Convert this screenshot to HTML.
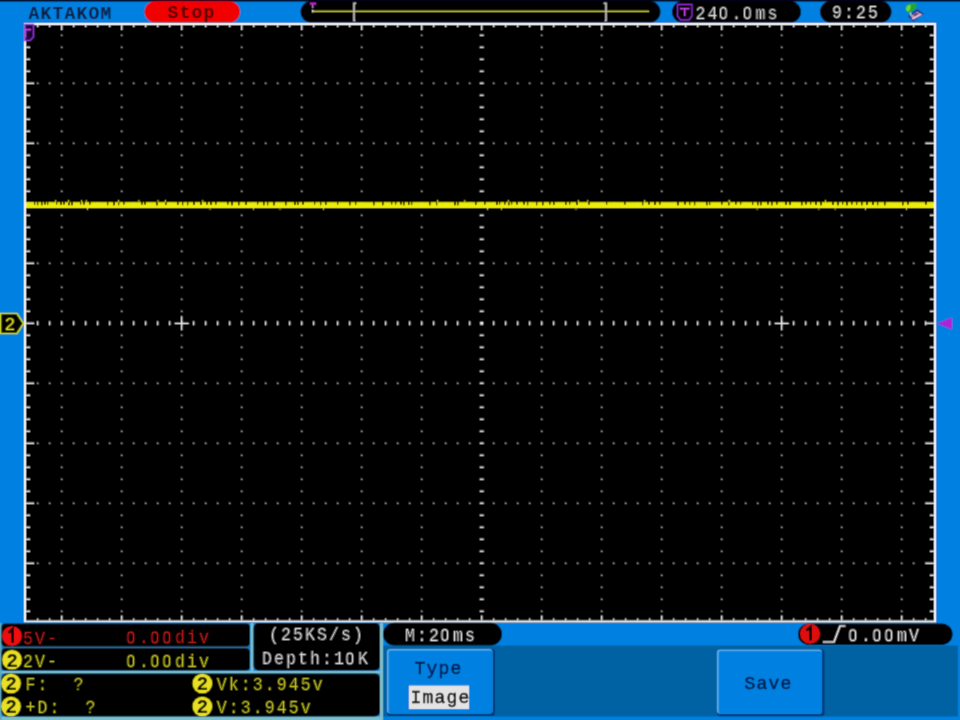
<!DOCTYPE html>
<html><head><meta charset="utf-8"><style>
html,body{margin:0;padding:0;background:#0080e0;overflow:hidden}
svg{display:block;will-change:transform}
text{font-family:"Liberation Mono"}
</style></head><body>
<svg width="960" height="720" viewBox="0 0 960 720">
<defs><filter id="soft" x="0" y="0" width="960" height="720" filterUnits="userSpaceOnUse"><feConvolveMatrix order="3" kernelMatrix="1 3 1 3 16 3 1 3 1" divisor="32" edgeMode="duplicate" preserveAlpha="true"/></filter></defs>
<g filter="url(#soft)">
<rect x="0" y="0" width="960" height="720" fill="#0080e0"/>
<rect x="0" y="0" width="960" height="1" fill="#000018"/>
<rect x="0" y="1" width="960" height="1" fill="#004080"/>
<text style="white-space:pre" x="28.60 40.60 52.60 64.60 76.60 88.60 100.60" y="18.5" fill="#0a1a40" font-size="18" font-weight="bold" >AKTAKOM</text>
<rect x="144.5" y="1.2" width="95.5" height="21.3" rx="10.65" ry="10.65" fill="#f20000"/>
<text style="white-space:pre" x="167.60 179.60 191.60 203.60" y="17.5" fill="#4a0000" font-size="18" font-weight="bold" >Stop</text>
<rect x="300.5" y="1" width="360.0" height="21.6" rx="10.8" ry="10.8" fill="#000"/>
<rect x="312" y="10.6" width="337" height="1.5" fill="#c0c030"/>
<rect x="312" y="10" width="1.5" height="2.4000000000000004" fill="#d8d8c0"/>
<path d="M310 2.5 H316 V4.6 H310 Z" fill="#d020e0"/>
<rect x="312.2" y="4.6" width="1.2" height="3.6" fill="#c0a0d0"/>
<path d="M353.2 2.6 H356.2 V3.9 H354.8 V20 L356 21.6 H353.2 Z" fill="#c8c8c8"/>
<path d="M603.6 2.6 H606.8 V21.6 H604 L605.2 20 V3.9 H603.6 Z" fill="#c8c8c8"/>
<rect x="672" y="1" width="129" height="21.6" rx="10.8" ry="10.8" fill="#000"/>
<path d="M677.5 4.5 H692 V16 L689 20 H680.5 L677.5 16 Z" fill="none" stroke="#8a2ad0" stroke-width="1.3"/>
<path d="M680 8 H689.5 V9.5 H685.5 V16 H684 V9.5 H680 Z" fill="#c040e0"/>
<text style="white-space:pre" x="756.01 769.06 782.10 795.14 808.19 821.23 834.27" y="19" fill="#e0e0e0" font-size="18" font-weight="normal" stroke="#000" stroke-width="0.2"  transform="scale(0.92 1)">24 . ms</text>
<rect x="720.50" y="7.60" width="5.6" height="10.8" rx="2.9" ry="3.4" fill="none" stroke="#e0e0e0" stroke-width="1.25"/>
<rect x="744.50" y="7.60" width="5.6" height="10.8" rx="2.9" ry="3.4" fill="none" stroke="#e0e0e0" stroke-width="1.25"/>
<rect x="820" y="1" width="71.5" height="21.6" rx="10.8" ry="10.8" fill="#000"/>
<text style="white-space:pre" x="904.38 917.43 930.47 943.51" y="17.8" fill="#e8e8e8" font-size="18" font-weight="normal" stroke="#000" stroke-width="0.2"  transform="scale(0.92 1)">9:25</text>
<g transform="translate(914 12) scale(1.15) translate(-914 -12)">
<path d="M909.8 15.6 L916.6 10.6 L921.2 13.6 L913.4 19.2 Z" fill="#b890b8" stroke="#143080" stroke-width="1.5"/>
<path d="M911.8 17.4 L920 13.2 L921 14.4 L913.2 18.8 Z" fill="#e6bcd4"/>
<path d="M913 14.4 L916.2 12.6 L918 13.6 L914.8 15.6 Z" fill="#5a3c70"/>
<path d="M910.6 11.5 L911.6 15.2" stroke="#a8d0e0" stroke-width="1.4"/>
<path d="M906.5 9.5 C906.2 6.4 908.6 4.6 911.6 4.8 C913.8 3.4 916.6 4.2 916.4 6.8 C916.2 9.4 913 10.6 911 12.4 C908.8 12.6 906.8 11.6 906.5 9.5 Z" fill="#26a626"/>
<path d="M907.2 9.6 C907 7.2 908.8 5.8 911 6 C911.5 8 910.5 10.5 909.5 11.6 C908 11.4 907.3 10.6 907.2 9.6 Z" fill="#6ad850"/>
</g>
<rect x="24" y="23" width="912" height="599.5" fill="#000"/>
<path d="M60.9 34.5h1.6v1.6h-1.6zM60.9 46.5h1.6v1.6h-1.6zM60.9 58.5h1.6v1.6h-1.6zM60.9 70.5h1.6v1.6h-1.6zM60.9 82.5h1.6v1.6h-1.6zM60.9 94.5h1.6v1.6h-1.6zM60.9 106.5h1.6v1.6h-1.6zM60.9 118.5h1.6v1.6h-1.6zM60.9 130.5h1.6v1.6h-1.6zM60.9 142.5h1.6v1.6h-1.6zM60.9 154.5h1.6v1.6h-1.6zM60.9 166.5h1.6v1.6h-1.6zM60.9 178.5h1.6v1.6h-1.6zM60.9 190.5h1.6v1.6h-1.6zM60.9 202.5h1.6v1.6h-1.6zM60.9 214.5h1.6v1.6h-1.6zM60.9 226.5h1.6v1.6h-1.6zM60.9 238.5h1.6v1.6h-1.6zM60.9 250.5h1.6v1.6h-1.6zM60.9 262.5h1.6v1.6h-1.6zM60.9 274.5h1.6v1.6h-1.6zM60.9 286.5h1.6v1.6h-1.6zM60.9 298.5h1.6v1.6h-1.6zM60.9 310.5h1.6v1.6h-1.6zM60.9 322.5h1.6v1.6h-1.6zM60.9 334.5h1.6v1.6h-1.6zM60.9 346.5h1.6v1.6h-1.6zM60.9 358.5h1.6v1.6h-1.6zM60.9 370.5h1.6v1.6h-1.6zM60.9 382.5h1.6v1.6h-1.6zM60.9 394.5h1.6v1.6h-1.6zM60.9 406.5h1.6v1.6h-1.6zM60.9 418.5h1.6v1.6h-1.6zM60.9 430.5h1.6v1.6h-1.6zM60.9 442.5h1.6v1.6h-1.6zM60.9 454.5h1.6v1.6h-1.6zM60.9 466.5h1.6v1.6h-1.6zM60.9 478.5h1.6v1.6h-1.6zM60.9 490.5h1.6v1.6h-1.6zM60.9 502.5h1.6v1.6h-1.6zM60.9 514.5h1.6v1.6h-1.6zM60.9 526.5h1.6v1.6h-1.6zM60.9 538.5h1.6v1.6h-1.6zM60.9 550.5h1.6v1.6h-1.6zM60.9 562.5h1.6v1.6h-1.6zM60.9 574.5h1.6v1.6h-1.6zM60.9 586.5h1.6v1.6h-1.6zM60.9 598.5h1.6v1.6h-1.6zM60.9 610.5h1.6v1.6h-1.6zM120.9 34.5h1.6v1.6h-1.6zM120.9 46.5h1.6v1.6h-1.6zM120.9 58.5h1.6v1.6h-1.6zM120.9 70.5h1.6v1.6h-1.6zM120.9 82.5h1.6v1.6h-1.6zM120.9 94.5h1.6v1.6h-1.6zM120.9 106.5h1.6v1.6h-1.6zM120.9 118.5h1.6v1.6h-1.6zM120.9 130.5h1.6v1.6h-1.6zM120.9 142.5h1.6v1.6h-1.6zM120.9 154.5h1.6v1.6h-1.6zM120.9 166.5h1.6v1.6h-1.6zM120.9 178.5h1.6v1.6h-1.6zM120.9 190.5h1.6v1.6h-1.6zM120.9 202.5h1.6v1.6h-1.6zM120.9 214.5h1.6v1.6h-1.6zM120.9 226.5h1.6v1.6h-1.6zM120.9 238.5h1.6v1.6h-1.6zM120.9 250.5h1.6v1.6h-1.6zM120.9 262.5h1.6v1.6h-1.6zM120.9 274.5h1.6v1.6h-1.6zM120.9 286.5h1.6v1.6h-1.6zM120.9 298.5h1.6v1.6h-1.6zM120.9 310.5h1.6v1.6h-1.6zM120.9 322.5h1.6v1.6h-1.6zM120.9 334.5h1.6v1.6h-1.6zM120.9 346.5h1.6v1.6h-1.6zM120.9 358.5h1.6v1.6h-1.6zM120.9 370.5h1.6v1.6h-1.6zM120.9 382.5h1.6v1.6h-1.6zM120.9 394.5h1.6v1.6h-1.6zM120.9 406.5h1.6v1.6h-1.6zM120.9 418.5h1.6v1.6h-1.6zM120.9 430.5h1.6v1.6h-1.6zM120.9 442.5h1.6v1.6h-1.6zM120.9 454.5h1.6v1.6h-1.6zM120.9 466.5h1.6v1.6h-1.6zM120.9 478.5h1.6v1.6h-1.6zM120.9 490.5h1.6v1.6h-1.6zM120.9 502.5h1.6v1.6h-1.6zM120.9 514.5h1.6v1.6h-1.6zM120.9 526.5h1.6v1.6h-1.6zM120.9 538.5h1.6v1.6h-1.6zM120.9 550.5h1.6v1.6h-1.6zM120.9 562.5h1.6v1.6h-1.6zM120.9 574.5h1.6v1.6h-1.6zM120.9 586.5h1.6v1.6h-1.6zM120.9 598.5h1.6v1.6h-1.6zM120.9 610.5h1.6v1.6h-1.6zM180.9 34.5h1.6v1.6h-1.6zM180.9 46.5h1.6v1.6h-1.6zM180.9 58.5h1.6v1.6h-1.6zM180.9 70.5h1.6v1.6h-1.6zM180.9 82.5h1.6v1.6h-1.6zM180.9 94.5h1.6v1.6h-1.6zM180.9 106.5h1.6v1.6h-1.6zM180.9 118.5h1.6v1.6h-1.6zM180.9 130.5h1.6v1.6h-1.6zM180.9 142.5h1.6v1.6h-1.6zM180.9 154.5h1.6v1.6h-1.6zM180.9 166.5h1.6v1.6h-1.6zM180.9 178.5h1.6v1.6h-1.6zM180.9 190.5h1.6v1.6h-1.6zM180.9 202.5h1.6v1.6h-1.6zM180.9 214.5h1.6v1.6h-1.6zM180.9 226.5h1.6v1.6h-1.6zM180.9 238.5h1.6v1.6h-1.6zM180.9 250.5h1.6v1.6h-1.6zM180.9 262.5h1.6v1.6h-1.6zM180.9 274.5h1.6v1.6h-1.6zM180.9 286.5h1.6v1.6h-1.6zM180.9 298.5h1.6v1.6h-1.6zM180.9 310.5h1.6v1.6h-1.6zM180.9 322.5h1.6v1.6h-1.6zM180.9 334.5h1.6v1.6h-1.6zM180.9 346.5h1.6v1.6h-1.6zM180.9 358.5h1.6v1.6h-1.6zM180.9 370.5h1.6v1.6h-1.6zM180.9 382.5h1.6v1.6h-1.6zM180.9 394.5h1.6v1.6h-1.6zM180.9 406.5h1.6v1.6h-1.6zM180.9 418.5h1.6v1.6h-1.6zM180.9 430.5h1.6v1.6h-1.6zM180.9 442.5h1.6v1.6h-1.6zM180.9 454.5h1.6v1.6h-1.6zM180.9 466.5h1.6v1.6h-1.6zM180.9 478.5h1.6v1.6h-1.6zM180.9 490.5h1.6v1.6h-1.6zM180.9 502.5h1.6v1.6h-1.6zM180.9 514.5h1.6v1.6h-1.6zM180.9 526.5h1.6v1.6h-1.6zM180.9 538.5h1.6v1.6h-1.6zM180.9 550.5h1.6v1.6h-1.6zM180.9 562.5h1.6v1.6h-1.6zM180.9 574.5h1.6v1.6h-1.6zM180.9 586.5h1.6v1.6h-1.6zM180.9 598.5h1.6v1.6h-1.6zM180.9 610.5h1.6v1.6h-1.6zM240.9 34.5h1.6v1.6h-1.6zM240.9 46.5h1.6v1.6h-1.6zM240.9 58.5h1.6v1.6h-1.6zM240.9 70.5h1.6v1.6h-1.6zM240.9 82.5h1.6v1.6h-1.6zM240.9 94.5h1.6v1.6h-1.6zM240.9 106.5h1.6v1.6h-1.6zM240.9 118.5h1.6v1.6h-1.6zM240.9 130.5h1.6v1.6h-1.6zM240.9 142.5h1.6v1.6h-1.6zM240.9 154.5h1.6v1.6h-1.6zM240.9 166.5h1.6v1.6h-1.6zM240.9 178.5h1.6v1.6h-1.6zM240.9 190.5h1.6v1.6h-1.6zM240.9 202.5h1.6v1.6h-1.6zM240.9 214.5h1.6v1.6h-1.6zM240.9 226.5h1.6v1.6h-1.6zM240.9 238.5h1.6v1.6h-1.6zM240.9 250.5h1.6v1.6h-1.6zM240.9 262.5h1.6v1.6h-1.6zM240.9 274.5h1.6v1.6h-1.6zM240.9 286.5h1.6v1.6h-1.6zM240.9 298.5h1.6v1.6h-1.6zM240.9 310.5h1.6v1.6h-1.6zM240.9 322.5h1.6v1.6h-1.6zM240.9 334.5h1.6v1.6h-1.6zM240.9 346.5h1.6v1.6h-1.6zM240.9 358.5h1.6v1.6h-1.6zM240.9 370.5h1.6v1.6h-1.6zM240.9 382.5h1.6v1.6h-1.6zM240.9 394.5h1.6v1.6h-1.6zM240.9 406.5h1.6v1.6h-1.6zM240.9 418.5h1.6v1.6h-1.6zM240.9 430.5h1.6v1.6h-1.6zM240.9 442.5h1.6v1.6h-1.6zM240.9 454.5h1.6v1.6h-1.6zM240.9 466.5h1.6v1.6h-1.6zM240.9 478.5h1.6v1.6h-1.6zM240.9 490.5h1.6v1.6h-1.6zM240.9 502.5h1.6v1.6h-1.6zM240.9 514.5h1.6v1.6h-1.6zM240.9 526.5h1.6v1.6h-1.6zM240.9 538.5h1.6v1.6h-1.6zM240.9 550.5h1.6v1.6h-1.6zM240.9 562.5h1.6v1.6h-1.6zM240.9 574.5h1.6v1.6h-1.6zM240.9 586.5h1.6v1.6h-1.6zM240.9 598.5h1.6v1.6h-1.6zM240.9 610.5h1.6v1.6h-1.6zM300.9 34.5h1.6v1.6h-1.6zM300.9 46.5h1.6v1.6h-1.6zM300.9 58.5h1.6v1.6h-1.6zM300.9 70.5h1.6v1.6h-1.6zM300.9 82.5h1.6v1.6h-1.6zM300.9 94.5h1.6v1.6h-1.6zM300.9 106.5h1.6v1.6h-1.6zM300.9 118.5h1.6v1.6h-1.6zM300.9 130.5h1.6v1.6h-1.6zM300.9 142.5h1.6v1.6h-1.6zM300.9 154.5h1.6v1.6h-1.6zM300.9 166.5h1.6v1.6h-1.6zM300.9 178.5h1.6v1.6h-1.6zM300.9 190.5h1.6v1.6h-1.6zM300.9 202.5h1.6v1.6h-1.6zM300.9 214.5h1.6v1.6h-1.6zM300.9 226.5h1.6v1.6h-1.6zM300.9 238.5h1.6v1.6h-1.6zM300.9 250.5h1.6v1.6h-1.6zM300.9 262.5h1.6v1.6h-1.6zM300.9 274.5h1.6v1.6h-1.6zM300.9 286.5h1.6v1.6h-1.6zM300.9 298.5h1.6v1.6h-1.6zM300.9 310.5h1.6v1.6h-1.6zM300.9 322.5h1.6v1.6h-1.6zM300.9 334.5h1.6v1.6h-1.6zM300.9 346.5h1.6v1.6h-1.6zM300.9 358.5h1.6v1.6h-1.6zM300.9 370.5h1.6v1.6h-1.6zM300.9 382.5h1.6v1.6h-1.6zM300.9 394.5h1.6v1.6h-1.6zM300.9 406.5h1.6v1.6h-1.6zM300.9 418.5h1.6v1.6h-1.6zM300.9 430.5h1.6v1.6h-1.6zM300.9 442.5h1.6v1.6h-1.6zM300.9 454.5h1.6v1.6h-1.6zM300.9 466.5h1.6v1.6h-1.6zM300.9 478.5h1.6v1.6h-1.6zM300.9 490.5h1.6v1.6h-1.6zM300.9 502.5h1.6v1.6h-1.6zM300.9 514.5h1.6v1.6h-1.6zM300.9 526.5h1.6v1.6h-1.6zM300.9 538.5h1.6v1.6h-1.6zM300.9 550.5h1.6v1.6h-1.6zM300.9 562.5h1.6v1.6h-1.6zM300.9 574.5h1.6v1.6h-1.6zM300.9 586.5h1.6v1.6h-1.6zM300.9 598.5h1.6v1.6h-1.6zM300.9 610.5h1.6v1.6h-1.6zM360.9 34.5h1.6v1.6h-1.6zM360.9 46.5h1.6v1.6h-1.6zM360.9 58.5h1.6v1.6h-1.6zM360.9 70.5h1.6v1.6h-1.6zM360.9 82.5h1.6v1.6h-1.6zM360.9 94.5h1.6v1.6h-1.6zM360.9 106.5h1.6v1.6h-1.6zM360.9 118.5h1.6v1.6h-1.6zM360.9 130.5h1.6v1.6h-1.6zM360.9 142.5h1.6v1.6h-1.6zM360.9 154.5h1.6v1.6h-1.6zM360.9 166.5h1.6v1.6h-1.6zM360.9 178.5h1.6v1.6h-1.6zM360.9 190.5h1.6v1.6h-1.6zM360.9 202.5h1.6v1.6h-1.6zM360.9 214.5h1.6v1.6h-1.6zM360.9 226.5h1.6v1.6h-1.6zM360.9 238.5h1.6v1.6h-1.6zM360.9 250.5h1.6v1.6h-1.6zM360.9 262.5h1.6v1.6h-1.6zM360.9 274.5h1.6v1.6h-1.6zM360.9 286.5h1.6v1.6h-1.6zM360.9 298.5h1.6v1.6h-1.6zM360.9 310.5h1.6v1.6h-1.6zM360.9 322.5h1.6v1.6h-1.6zM360.9 334.5h1.6v1.6h-1.6zM360.9 346.5h1.6v1.6h-1.6zM360.9 358.5h1.6v1.6h-1.6zM360.9 370.5h1.6v1.6h-1.6zM360.9 382.5h1.6v1.6h-1.6zM360.9 394.5h1.6v1.6h-1.6zM360.9 406.5h1.6v1.6h-1.6zM360.9 418.5h1.6v1.6h-1.6zM360.9 430.5h1.6v1.6h-1.6zM360.9 442.5h1.6v1.6h-1.6zM360.9 454.5h1.6v1.6h-1.6zM360.9 466.5h1.6v1.6h-1.6zM360.9 478.5h1.6v1.6h-1.6zM360.9 490.5h1.6v1.6h-1.6zM360.9 502.5h1.6v1.6h-1.6zM360.9 514.5h1.6v1.6h-1.6zM360.9 526.5h1.6v1.6h-1.6zM360.9 538.5h1.6v1.6h-1.6zM360.9 550.5h1.6v1.6h-1.6zM360.9 562.5h1.6v1.6h-1.6zM360.9 574.5h1.6v1.6h-1.6zM360.9 586.5h1.6v1.6h-1.6zM360.9 598.5h1.6v1.6h-1.6zM360.9 610.5h1.6v1.6h-1.6zM420.9 34.5h1.6v1.6h-1.6zM420.9 46.5h1.6v1.6h-1.6zM420.9 58.5h1.6v1.6h-1.6zM420.9 70.5h1.6v1.6h-1.6zM420.9 82.5h1.6v1.6h-1.6zM420.9 94.5h1.6v1.6h-1.6zM420.9 106.5h1.6v1.6h-1.6zM420.9 118.5h1.6v1.6h-1.6zM420.9 130.5h1.6v1.6h-1.6zM420.9 142.5h1.6v1.6h-1.6zM420.9 154.5h1.6v1.6h-1.6zM420.9 166.5h1.6v1.6h-1.6zM420.9 178.5h1.6v1.6h-1.6zM420.9 190.5h1.6v1.6h-1.6zM420.9 202.5h1.6v1.6h-1.6zM420.9 214.5h1.6v1.6h-1.6zM420.9 226.5h1.6v1.6h-1.6zM420.9 238.5h1.6v1.6h-1.6zM420.9 250.5h1.6v1.6h-1.6zM420.9 262.5h1.6v1.6h-1.6zM420.9 274.5h1.6v1.6h-1.6zM420.9 286.5h1.6v1.6h-1.6zM420.9 298.5h1.6v1.6h-1.6zM420.9 310.5h1.6v1.6h-1.6zM420.9 322.5h1.6v1.6h-1.6zM420.9 334.5h1.6v1.6h-1.6zM420.9 346.5h1.6v1.6h-1.6zM420.9 358.5h1.6v1.6h-1.6zM420.9 370.5h1.6v1.6h-1.6zM420.9 382.5h1.6v1.6h-1.6zM420.9 394.5h1.6v1.6h-1.6zM420.9 406.5h1.6v1.6h-1.6zM420.9 418.5h1.6v1.6h-1.6zM420.9 430.5h1.6v1.6h-1.6zM420.9 442.5h1.6v1.6h-1.6zM420.9 454.5h1.6v1.6h-1.6zM420.9 466.5h1.6v1.6h-1.6zM420.9 478.5h1.6v1.6h-1.6zM420.9 490.5h1.6v1.6h-1.6zM420.9 502.5h1.6v1.6h-1.6zM420.9 514.5h1.6v1.6h-1.6zM420.9 526.5h1.6v1.6h-1.6zM420.9 538.5h1.6v1.6h-1.6zM420.9 550.5h1.6v1.6h-1.6zM420.9 562.5h1.6v1.6h-1.6zM420.9 574.5h1.6v1.6h-1.6zM420.9 586.5h1.6v1.6h-1.6zM420.9 598.5h1.6v1.6h-1.6zM420.9 610.5h1.6v1.6h-1.6zM540.9 34.5h1.6v1.6h-1.6zM540.9 46.5h1.6v1.6h-1.6zM540.9 58.5h1.6v1.6h-1.6zM540.9 70.5h1.6v1.6h-1.6zM540.9 82.5h1.6v1.6h-1.6zM540.9 94.5h1.6v1.6h-1.6zM540.9 106.5h1.6v1.6h-1.6zM540.9 118.5h1.6v1.6h-1.6zM540.9 130.5h1.6v1.6h-1.6zM540.9 142.5h1.6v1.6h-1.6zM540.9 154.5h1.6v1.6h-1.6zM540.9 166.5h1.6v1.6h-1.6zM540.9 178.5h1.6v1.6h-1.6zM540.9 190.5h1.6v1.6h-1.6zM540.9 202.5h1.6v1.6h-1.6zM540.9 214.5h1.6v1.6h-1.6zM540.9 226.5h1.6v1.6h-1.6zM540.9 238.5h1.6v1.6h-1.6zM540.9 250.5h1.6v1.6h-1.6zM540.9 262.5h1.6v1.6h-1.6zM540.9 274.5h1.6v1.6h-1.6zM540.9 286.5h1.6v1.6h-1.6zM540.9 298.5h1.6v1.6h-1.6zM540.9 310.5h1.6v1.6h-1.6zM540.9 322.5h1.6v1.6h-1.6zM540.9 334.5h1.6v1.6h-1.6zM540.9 346.5h1.6v1.6h-1.6zM540.9 358.5h1.6v1.6h-1.6zM540.9 370.5h1.6v1.6h-1.6zM540.9 382.5h1.6v1.6h-1.6zM540.9 394.5h1.6v1.6h-1.6zM540.9 406.5h1.6v1.6h-1.6zM540.9 418.5h1.6v1.6h-1.6zM540.9 430.5h1.6v1.6h-1.6zM540.9 442.5h1.6v1.6h-1.6zM540.9 454.5h1.6v1.6h-1.6zM540.9 466.5h1.6v1.6h-1.6zM540.9 478.5h1.6v1.6h-1.6zM540.9 490.5h1.6v1.6h-1.6zM540.9 502.5h1.6v1.6h-1.6zM540.9 514.5h1.6v1.6h-1.6zM540.9 526.5h1.6v1.6h-1.6zM540.9 538.5h1.6v1.6h-1.6zM540.9 550.5h1.6v1.6h-1.6zM540.9 562.5h1.6v1.6h-1.6zM540.9 574.5h1.6v1.6h-1.6zM540.9 586.5h1.6v1.6h-1.6zM540.9 598.5h1.6v1.6h-1.6zM540.9 610.5h1.6v1.6h-1.6zM600.9 34.5h1.6v1.6h-1.6zM600.9 46.5h1.6v1.6h-1.6zM600.9 58.5h1.6v1.6h-1.6zM600.9 70.5h1.6v1.6h-1.6zM600.9 82.5h1.6v1.6h-1.6zM600.9 94.5h1.6v1.6h-1.6zM600.9 106.5h1.6v1.6h-1.6zM600.9 118.5h1.6v1.6h-1.6zM600.9 130.5h1.6v1.6h-1.6zM600.9 142.5h1.6v1.6h-1.6zM600.9 154.5h1.6v1.6h-1.6zM600.9 166.5h1.6v1.6h-1.6zM600.9 178.5h1.6v1.6h-1.6zM600.9 190.5h1.6v1.6h-1.6zM600.9 202.5h1.6v1.6h-1.6zM600.9 214.5h1.6v1.6h-1.6zM600.9 226.5h1.6v1.6h-1.6zM600.9 238.5h1.6v1.6h-1.6zM600.9 250.5h1.6v1.6h-1.6zM600.9 262.5h1.6v1.6h-1.6zM600.9 274.5h1.6v1.6h-1.6zM600.9 286.5h1.6v1.6h-1.6zM600.9 298.5h1.6v1.6h-1.6zM600.9 310.5h1.6v1.6h-1.6zM600.9 322.5h1.6v1.6h-1.6zM600.9 334.5h1.6v1.6h-1.6zM600.9 346.5h1.6v1.6h-1.6zM600.9 358.5h1.6v1.6h-1.6zM600.9 370.5h1.6v1.6h-1.6zM600.9 382.5h1.6v1.6h-1.6zM600.9 394.5h1.6v1.6h-1.6zM600.9 406.5h1.6v1.6h-1.6zM600.9 418.5h1.6v1.6h-1.6zM600.9 430.5h1.6v1.6h-1.6zM600.9 442.5h1.6v1.6h-1.6zM600.9 454.5h1.6v1.6h-1.6zM600.9 466.5h1.6v1.6h-1.6zM600.9 478.5h1.6v1.6h-1.6zM600.9 490.5h1.6v1.6h-1.6zM600.9 502.5h1.6v1.6h-1.6zM600.9 514.5h1.6v1.6h-1.6zM600.9 526.5h1.6v1.6h-1.6zM600.9 538.5h1.6v1.6h-1.6zM600.9 550.5h1.6v1.6h-1.6zM600.9 562.5h1.6v1.6h-1.6zM600.9 574.5h1.6v1.6h-1.6zM600.9 586.5h1.6v1.6h-1.6zM600.9 598.5h1.6v1.6h-1.6zM600.9 610.5h1.6v1.6h-1.6zM660.9 34.5h1.6v1.6h-1.6zM660.9 46.5h1.6v1.6h-1.6zM660.9 58.5h1.6v1.6h-1.6zM660.9 70.5h1.6v1.6h-1.6zM660.9 82.5h1.6v1.6h-1.6zM660.9 94.5h1.6v1.6h-1.6zM660.9 106.5h1.6v1.6h-1.6zM660.9 118.5h1.6v1.6h-1.6zM660.9 130.5h1.6v1.6h-1.6zM660.9 142.5h1.6v1.6h-1.6zM660.9 154.5h1.6v1.6h-1.6zM660.9 166.5h1.6v1.6h-1.6zM660.9 178.5h1.6v1.6h-1.6zM660.9 190.5h1.6v1.6h-1.6zM660.9 202.5h1.6v1.6h-1.6zM660.9 214.5h1.6v1.6h-1.6zM660.9 226.5h1.6v1.6h-1.6zM660.9 238.5h1.6v1.6h-1.6zM660.9 250.5h1.6v1.6h-1.6zM660.9 262.5h1.6v1.6h-1.6zM660.9 274.5h1.6v1.6h-1.6zM660.9 286.5h1.6v1.6h-1.6zM660.9 298.5h1.6v1.6h-1.6zM660.9 310.5h1.6v1.6h-1.6zM660.9 322.5h1.6v1.6h-1.6zM660.9 334.5h1.6v1.6h-1.6zM660.9 346.5h1.6v1.6h-1.6zM660.9 358.5h1.6v1.6h-1.6zM660.9 370.5h1.6v1.6h-1.6zM660.9 382.5h1.6v1.6h-1.6zM660.9 394.5h1.6v1.6h-1.6zM660.9 406.5h1.6v1.6h-1.6zM660.9 418.5h1.6v1.6h-1.6zM660.9 430.5h1.6v1.6h-1.6zM660.9 442.5h1.6v1.6h-1.6zM660.9 454.5h1.6v1.6h-1.6zM660.9 466.5h1.6v1.6h-1.6zM660.9 478.5h1.6v1.6h-1.6zM660.9 490.5h1.6v1.6h-1.6zM660.9 502.5h1.6v1.6h-1.6zM660.9 514.5h1.6v1.6h-1.6zM660.9 526.5h1.6v1.6h-1.6zM660.9 538.5h1.6v1.6h-1.6zM660.9 550.5h1.6v1.6h-1.6zM660.9 562.5h1.6v1.6h-1.6zM660.9 574.5h1.6v1.6h-1.6zM660.9 586.5h1.6v1.6h-1.6zM660.9 598.5h1.6v1.6h-1.6zM660.9 610.5h1.6v1.6h-1.6zM720.9 34.5h1.6v1.6h-1.6zM720.9 46.5h1.6v1.6h-1.6zM720.9 58.5h1.6v1.6h-1.6zM720.9 70.5h1.6v1.6h-1.6zM720.9 82.5h1.6v1.6h-1.6zM720.9 94.5h1.6v1.6h-1.6zM720.9 106.5h1.6v1.6h-1.6zM720.9 118.5h1.6v1.6h-1.6zM720.9 130.5h1.6v1.6h-1.6zM720.9 142.5h1.6v1.6h-1.6zM720.9 154.5h1.6v1.6h-1.6zM720.9 166.5h1.6v1.6h-1.6zM720.9 178.5h1.6v1.6h-1.6zM720.9 190.5h1.6v1.6h-1.6zM720.9 202.5h1.6v1.6h-1.6zM720.9 214.5h1.6v1.6h-1.6zM720.9 226.5h1.6v1.6h-1.6zM720.9 238.5h1.6v1.6h-1.6zM720.9 250.5h1.6v1.6h-1.6zM720.9 262.5h1.6v1.6h-1.6zM720.9 274.5h1.6v1.6h-1.6zM720.9 286.5h1.6v1.6h-1.6zM720.9 298.5h1.6v1.6h-1.6zM720.9 310.5h1.6v1.6h-1.6zM720.9 322.5h1.6v1.6h-1.6zM720.9 334.5h1.6v1.6h-1.6zM720.9 346.5h1.6v1.6h-1.6zM720.9 358.5h1.6v1.6h-1.6zM720.9 370.5h1.6v1.6h-1.6zM720.9 382.5h1.6v1.6h-1.6zM720.9 394.5h1.6v1.6h-1.6zM720.9 406.5h1.6v1.6h-1.6zM720.9 418.5h1.6v1.6h-1.6zM720.9 430.5h1.6v1.6h-1.6zM720.9 442.5h1.6v1.6h-1.6zM720.9 454.5h1.6v1.6h-1.6zM720.9 466.5h1.6v1.6h-1.6zM720.9 478.5h1.6v1.6h-1.6zM720.9 490.5h1.6v1.6h-1.6zM720.9 502.5h1.6v1.6h-1.6zM720.9 514.5h1.6v1.6h-1.6zM720.9 526.5h1.6v1.6h-1.6zM720.9 538.5h1.6v1.6h-1.6zM720.9 550.5h1.6v1.6h-1.6zM720.9 562.5h1.6v1.6h-1.6zM720.9 574.5h1.6v1.6h-1.6zM720.9 586.5h1.6v1.6h-1.6zM720.9 598.5h1.6v1.6h-1.6zM720.9 610.5h1.6v1.6h-1.6zM780.9 34.5h1.6v1.6h-1.6zM780.9 46.5h1.6v1.6h-1.6zM780.9 58.5h1.6v1.6h-1.6zM780.9 70.5h1.6v1.6h-1.6zM780.9 82.5h1.6v1.6h-1.6zM780.9 94.5h1.6v1.6h-1.6zM780.9 106.5h1.6v1.6h-1.6zM780.9 118.5h1.6v1.6h-1.6zM780.9 130.5h1.6v1.6h-1.6zM780.9 142.5h1.6v1.6h-1.6zM780.9 154.5h1.6v1.6h-1.6zM780.9 166.5h1.6v1.6h-1.6zM780.9 178.5h1.6v1.6h-1.6zM780.9 190.5h1.6v1.6h-1.6zM780.9 202.5h1.6v1.6h-1.6zM780.9 214.5h1.6v1.6h-1.6zM780.9 226.5h1.6v1.6h-1.6zM780.9 238.5h1.6v1.6h-1.6zM780.9 250.5h1.6v1.6h-1.6zM780.9 262.5h1.6v1.6h-1.6zM780.9 274.5h1.6v1.6h-1.6zM780.9 286.5h1.6v1.6h-1.6zM780.9 298.5h1.6v1.6h-1.6zM780.9 310.5h1.6v1.6h-1.6zM780.9 322.5h1.6v1.6h-1.6zM780.9 334.5h1.6v1.6h-1.6zM780.9 346.5h1.6v1.6h-1.6zM780.9 358.5h1.6v1.6h-1.6zM780.9 370.5h1.6v1.6h-1.6zM780.9 382.5h1.6v1.6h-1.6zM780.9 394.5h1.6v1.6h-1.6zM780.9 406.5h1.6v1.6h-1.6zM780.9 418.5h1.6v1.6h-1.6zM780.9 430.5h1.6v1.6h-1.6zM780.9 442.5h1.6v1.6h-1.6zM780.9 454.5h1.6v1.6h-1.6zM780.9 466.5h1.6v1.6h-1.6zM780.9 478.5h1.6v1.6h-1.6zM780.9 490.5h1.6v1.6h-1.6zM780.9 502.5h1.6v1.6h-1.6zM780.9 514.5h1.6v1.6h-1.6zM780.9 526.5h1.6v1.6h-1.6zM780.9 538.5h1.6v1.6h-1.6zM780.9 550.5h1.6v1.6h-1.6zM780.9 562.5h1.6v1.6h-1.6zM780.9 574.5h1.6v1.6h-1.6zM780.9 586.5h1.6v1.6h-1.6zM780.9 598.5h1.6v1.6h-1.6zM780.9 610.5h1.6v1.6h-1.6zM840.9 34.5h1.6v1.6h-1.6zM840.9 46.5h1.6v1.6h-1.6zM840.9 58.5h1.6v1.6h-1.6zM840.9 70.5h1.6v1.6h-1.6zM840.9 82.5h1.6v1.6h-1.6zM840.9 94.5h1.6v1.6h-1.6zM840.9 106.5h1.6v1.6h-1.6zM840.9 118.5h1.6v1.6h-1.6zM840.9 130.5h1.6v1.6h-1.6zM840.9 142.5h1.6v1.6h-1.6zM840.9 154.5h1.6v1.6h-1.6zM840.9 166.5h1.6v1.6h-1.6zM840.9 178.5h1.6v1.6h-1.6zM840.9 190.5h1.6v1.6h-1.6zM840.9 202.5h1.6v1.6h-1.6zM840.9 214.5h1.6v1.6h-1.6zM840.9 226.5h1.6v1.6h-1.6zM840.9 238.5h1.6v1.6h-1.6zM840.9 250.5h1.6v1.6h-1.6zM840.9 262.5h1.6v1.6h-1.6zM840.9 274.5h1.6v1.6h-1.6zM840.9 286.5h1.6v1.6h-1.6zM840.9 298.5h1.6v1.6h-1.6zM840.9 310.5h1.6v1.6h-1.6zM840.9 322.5h1.6v1.6h-1.6zM840.9 334.5h1.6v1.6h-1.6zM840.9 346.5h1.6v1.6h-1.6zM840.9 358.5h1.6v1.6h-1.6zM840.9 370.5h1.6v1.6h-1.6zM840.9 382.5h1.6v1.6h-1.6zM840.9 394.5h1.6v1.6h-1.6zM840.9 406.5h1.6v1.6h-1.6zM840.9 418.5h1.6v1.6h-1.6zM840.9 430.5h1.6v1.6h-1.6zM840.9 442.5h1.6v1.6h-1.6zM840.9 454.5h1.6v1.6h-1.6zM840.9 466.5h1.6v1.6h-1.6zM840.9 478.5h1.6v1.6h-1.6zM840.9 490.5h1.6v1.6h-1.6zM840.9 502.5h1.6v1.6h-1.6zM840.9 514.5h1.6v1.6h-1.6zM840.9 526.5h1.6v1.6h-1.6zM840.9 538.5h1.6v1.6h-1.6zM840.9 550.5h1.6v1.6h-1.6zM840.9 562.5h1.6v1.6h-1.6zM840.9 574.5h1.6v1.6h-1.6zM840.9 586.5h1.6v1.6h-1.6zM840.9 598.5h1.6v1.6h-1.6zM840.9 610.5h1.6v1.6h-1.6zM900.9 34.5h1.6v1.6h-1.6zM900.9 46.5h1.6v1.6h-1.6zM900.9 58.5h1.6v1.6h-1.6zM900.9 70.5h1.6v1.6h-1.6zM900.9 82.5h1.6v1.6h-1.6zM900.9 94.5h1.6v1.6h-1.6zM900.9 106.5h1.6v1.6h-1.6zM900.9 118.5h1.6v1.6h-1.6zM900.9 130.5h1.6v1.6h-1.6zM900.9 142.5h1.6v1.6h-1.6zM900.9 154.5h1.6v1.6h-1.6zM900.9 166.5h1.6v1.6h-1.6zM900.9 178.5h1.6v1.6h-1.6zM900.9 190.5h1.6v1.6h-1.6zM900.9 202.5h1.6v1.6h-1.6zM900.9 214.5h1.6v1.6h-1.6zM900.9 226.5h1.6v1.6h-1.6zM900.9 238.5h1.6v1.6h-1.6zM900.9 250.5h1.6v1.6h-1.6zM900.9 262.5h1.6v1.6h-1.6zM900.9 274.5h1.6v1.6h-1.6zM900.9 286.5h1.6v1.6h-1.6zM900.9 298.5h1.6v1.6h-1.6zM900.9 310.5h1.6v1.6h-1.6zM900.9 322.5h1.6v1.6h-1.6zM900.9 334.5h1.6v1.6h-1.6zM900.9 346.5h1.6v1.6h-1.6zM900.9 358.5h1.6v1.6h-1.6zM900.9 370.5h1.6v1.6h-1.6zM900.9 382.5h1.6v1.6h-1.6zM900.9 394.5h1.6v1.6h-1.6zM900.9 406.5h1.6v1.6h-1.6zM900.9 418.5h1.6v1.6h-1.6zM900.9 430.5h1.6v1.6h-1.6zM900.9 442.5h1.6v1.6h-1.6zM900.9 454.5h1.6v1.6h-1.6zM900.9 466.5h1.6v1.6h-1.6zM900.9 478.5h1.6v1.6h-1.6zM900.9 490.5h1.6v1.6h-1.6zM900.9 502.5h1.6v1.6h-1.6zM900.9 514.5h1.6v1.6h-1.6zM900.9 526.5h1.6v1.6h-1.6zM900.9 538.5h1.6v1.6h-1.6zM900.9 550.5h1.6v1.6h-1.6zM900.9 562.5h1.6v1.6h-1.6zM900.9 574.5h1.6v1.6h-1.6zM900.9 586.5h1.6v1.6h-1.6zM900.9 598.5h1.6v1.6h-1.6zM900.9 610.5h1.6v1.6h-1.6zM36.9 82.5h1.6v1.6h-1.6zM48.9 82.5h1.6v1.6h-1.6zM60.9 82.5h1.6v1.6h-1.6zM72.9 82.5h1.6v1.6h-1.6zM84.9 82.5h1.6v1.6h-1.6zM96.9 82.5h1.6v1.6h-1.6zM108.9 82.5h1.6v1.6h-1.6zM120.9 82.5h1.6v1.6h-1.6zM132.9 82.5h1.6v1.6h-1.6zM144.9 82.5h1.6v1.6h-1.6zM156.9 82.5h1.6v1.6h-1.6zM168.9 82.5h1.6v1.6h-1.6zM180.9 82.5h1.6v1.6h-1.6zM192.9 82.5h1.6v1.6h-1.6zM204.9 82.5h1.6v1.6h-1.6zM216.9 82.5h1.6v1.6h-1.6zM228.9 82.5h1.6v1.6h-1.6zM240.9 82.5h1.6v1.6h-1.6zM252.9 82.5h1.6v1.6h-1.6zM264.9 82.5h1.6v1.6h-1.6zM276.9 82.5h1.6v1.6h-1.6zM288.9 82.5h1.6v1.6h-1.6zM300.9 82.5h1.6v1.6h-1.6zM312.9 82.5h1.6v1.6h-1.6zM324.9 82.5h1.6v1.6h-1.6zM336.9 82.5h1.6v1.6h-1.6zM348.9 82.5h1.6v1.6h-1.6zM360.9 82.5h1.6v1.6h-1.6zM372.9 82.5h1.6v1.6h-1.6zM384.9 82.5h1.6v1.6h-1.6zM396.9 82.5h1.6v1.6h-1.6zM408.9 82.5h1.6v1.6h-1.6zM420.9 82.5h1.6v1.6h-1.6zM432.9 82.5h1.6v1.6h-1.6zM444.9 82.5h1.6v1.6h-1.6zM456.9 82.5h1.6v1.6h-1.6zM468.9 82.5h1.6v1.6h-1.6zM480.9 82.5h1.6v1.6h-1.6zM492.9 82.5h1.6v1.6h-1.6zM504.9 82.5h1.6v1.6h-1.6zM516.9 82.5h1.6v1.6h-1.6zM528.9 82.5h1.6v1.6h-1.6zM540.9 82.5h1.6v1.6h-1.6zM552.9 82.5h1.6v1.6h-1.6zM564.9 82.5h1.6v1.6h-1.6zM576.9 82.5h1.6v1.6h-1.6zM588.9 82.5h1.6v1.6h-1.6zM600.9 82.5h1.6v1.6h-1.6zM612.9 82.5h1.6v1.6h-1.6zM624.9 82.5h1.6v1.6h-1.6zM636.9 82.5h1.6v1.6h-1.6zM648.9 82.5h1.6v1.6h-1.6zM660.9 82.5h1.6v1.6h-1.6zM672.9 82.5h1.6v1.6h-1.6zM684.9 82.5h1.6v1.6h-1.6zM696.9 82.5h1.6v1.6h-1.6zM708.9 82.5h1.6v1.6h-1.6zM720.9 82.5h1.6v1.6h-1.6zM732.9 82.5h1.6v1.6h-1.6zM744.9 82.5h1.6v1.6h-1.6zM756.9 82.5h1.6v1.6h-1.6zM768.9 82.5h1.6v1.6h-1.6zM780.9 82.5h1.6v1.6h-1.6zM792.9 82.5h1.6v1.6h-1.6zM804.9 82.5h1.6v1.6h-1.6zM816.9 82.5h1.6v1.6h-1.6zM828.9 82.5h1.6v1.6h-1.6zM840.9 82.5h1.6v1.6h-1.6zM852.9 82.5h1.6v1.6h-1.6zM864.9 82.5h1.6v1.6h-1.6zM876.9 82.5h1.6v1.6h-1.6zM888.9 82.5h1.6v1.6h-1.6zM900.9 82.5h1.6v1.6h-1.6zM912.9 82.5h1.6v1.6h-1.6zM924.9 82.5h1.6v1.6h-1.6zM36.9 142.5h1.6v1.6h-1.6zM48.9 142.5h1.6v1.6h-1.6zM60.9 142.5h1.6v1.6h-1.6zM72.9 142.5h1.6v1.6h-1.6zM84.9 142.5h1.6v1.6h-1.6zM96.9 142.5h1.6v1.6h-1.6zM108.9 142.5h1.6v1.6h-1.6zM120.9 142.5h1.6v1.6h-1.6zM132.9 142.5h1.6v1.6h-1.6zM144.9 142.5h1.6v1.6h-1.6zM156.9 142.5h1.6v1.6h-1.6zM168.9 142.5h1.6v1.6h-1.6zM180.9 142.5h1.6v1.6h-1.6zM192.9 142.5h1.6v1.6h-1.6zM204.9 142.5h1.6v1.6h-1.6zM216.9 142.5h1.6v1.6h-1.6zM228.9 142.5h1.6v1.6h-1.6zM240.9 142.5h1.6v1.6h-1.6zM252.9 142.5h1.6v1.6h-1.6zM264.9 142.5h1.6v1.6h-1.6zM276.9 142.5h1.6v1.6h-1.6zM288.9 142.5h1.6v1.6h-1.6zM300.9 142.5h1.6v1.6h-1.6zM312.9 142.5h1.6v1.6h-1.6zM324.9 142.5h1.6v1.6h-1.6zM336.9 142.5h1.6v1.6h-1.6zM348.9 142.5h1.6v1.6h-1.6zM360.9 142.5h1.6v1.6h-1.6zM372.9 142.5h1.6v1.6h-1.6zM384.9 142.5h1.6v1.6h-1.6zM396.9 142.5h1.6v1.6h-1.6zM408.9 142.5h1.6v1.6h-1.6zM420.9 142.5h1.6v1.6h-1.6zM432.9 142.5h1.6v1.6h-1.6zM444.9 142.5h1.6v1.6h-1.6zM456.9 142.5h1.6v1.6h-1.6zM468.9 142.5h1.6v1.6h-1.6zM480.9 142.5h1.6v1.6h-1.6zM492.9 142.5h1.6v1.6h-1.6zM504.9 142.5h1.6v1.6h-1.6zM516.9 142.5h1.6v1.6h-1.6zM528.9 142.5h1.6v1.6h-1.6zM540.9 142.5h1.6v1.6h-1.6zM552.9 142.5h1.6v1.6h-1.6zM564.9 142.5h1.6v1.6h-1.6zM576.9 142.5h1.6v1.6h-1.6zM588.9 142.5h1.6v1.6h-1.6zM600.9 142.5h1.6v1.6h-1.6zM612.9 142.5h1.6v1.6h-1.6zM624.9 142.5h1.6v1.6h-1.6zM636.9 142.5h1.6v1.6h-1.6zM648.9 142.5h1.6v1.6h-1.6zM660.9 142.5h1.6v1.6h-1.6zM672.9 142.5h1.6v1.6h-1.6zM684.9 142.5h1.6v1.6h-1.6zM696.9 142.5h1.6v1.6h-1.6zM708.9 142.5h1.6v1.6h-1.6zM720.9 142.5h1.6v1.6h-1.6zM732.9 142.5h1.6v1.6h-1.6zM744.9 142.5h1.6v1.6h-1.6zM756.9 142.5h1.6v1.6h-1.6zM768.9 142.5h1.6v1.6h-1.6zM780.9 142.5h1.6v1.6h-1.6zM792.9 142.5h1.6v1.6h-1.6zM804.9 142.5h1.6v1.6h-1.6zM816.9 142.5h1.6v1.6h-1.6zM828.9 142.5h1.6v1.6h-1.6zM840.9 142.5h1.6v1.6h-1.6zM852.9 142.5h1.6v1.6h-1.6zM864.9 142.5h1.6v1.6h-1.6zM876.9 142.5h1.6v1.6h-1.6zM888.9 142.5h1.6v1.6h-1.6zM900.9 142.5h1.6v1.6h-1.6zM912.9 142.5h1.6v1.6h-1.6zM924.9 142.5h1.6v1.6h-1.6zM36.9 202.5h1.6v1.6h-1.6zM48.9 202.5h1.6v1.6h-1.6zM60.9 202.5h1.6v1.6h-1.6zM72.9 202.5h1.6v1.6h-1.6zM84.9 202.5h1.6v1.6h-1.6zM96.9 202.5h1.6v1.6h-1.6zM108.9 202.5h1.6v1.6h-1.6zM120.9 202.5h1.6v1.6h-1.6zM132.9 202.5h1.6v1.6h-1.6zM144.9 202.5h1.6v1.6h-1.6zM156.9 202.5h1.6v1.6h-1.6zM168.9 202.5h1.6v1.6h-1.6zM180.9 202.5h1.6v1.6h-1.6zM192.9 202.5h1.6v1.6h-1.6zM204.9 202.5h1.6v1.6h-1.6zM216.9 202.5h1.6v1.6h-1.6zM228.9 202.5h1.6v1.6h-1.6zM240.9 202.5h1.6v1.6h-1.6zM252.9 202.5h1.6v1.6h-1.6zM264.9 202.5h1.6v1.6h-1.6zM276.9 202.5h1.6v1.6h-1.6zM288.9 202.5h1.6v1.6h-1.6zM300.9 202.5h1.6v1.6h-1.6zM312.9 202.5h1.6v1.6h-1.6zM324.9 202.5h1.6v1.6h-1.6zM336.9 202.5h1.6v1.6h-1.6zM348.9 202.5h1.6v1.6h-1.6zM360.9 202.5h1.6v1.6h-1.6zM372.9 202.5h1.6v1.6h-1.6zM384.9 202.5h1.6v1.6h-1.6zM396.9 202.5h1.6v1.6h-1.6zM408.9 202.5h1.6v1.6h-1.6zM420.9 202.5h1.6v1.6h-1.6zM432.9 202.5h1.6v1.6h-1.6zM444.9 202.5h1.6v1.6h-1.6zM456.9 202.5h1.6v1.6h-1.6zM468.9 202.5h1.6v1.6h-1.6zM480.9 202.5h1.6v1.6h-1.6zM492.9 202.5h1.6v1.6h-1.6zM504.9 202.5h1.6v1.6h-1.6zM516.9 202.5h1.6v1.6h-1.6zM528.9 202.5h1.6v1.6h-1.6zM540.9 202.5h1.6v1.6h-1.6zM552.9 202.5h1.6v1.6h-1.6zM564.9 202.5h1.6v1.6h-1.6zM576.9 202.5h1.6v1.6h-1.6zM588.9 202.5h1.6v1.6h-1.6zM600.9 202.5h1.6v1.6h-1.6zM612.9 202.5h1.6v1.6h-1.6zM624.9 202.5h1.6v1.6h-1.6zM636.9 202.5h1.6v1.6h-1.6zM648.9 202.5h1.6v1.6h-1.6zM660.9 202.5h1.6v1.6h-1.6zM672.9 202.5h1.6v1.6h-1.6zM684.9 202.5h1.6v1.6h-1.6zM696.9 202.5h1.6v1.6h-1.6zM708.9 202.5h1.6v1.6h-1.6zM720.9 202.5h1.6v1.6h-1.6zM732.9 202.5h1.6v1.6h-1.6zM744.9 202.5h1.6v1.6h-1.6zM756.9 202.5h1.6v1.6h-1.6zM768.9 202.5h1.6v1.6h-1.6zM780.9 202.5h1.6v1.6h-1.6zM792.9 202.5h1.6v1.6h-1.6zM804.9 202.5h1.6v1.6h-1.6zM816.9 202.5h1.6v1.6h-1.6zM828.9 202.5h1.6v1.6h-1.6zM840.9 202.5h1.6v1.6h-1.6zM852.9 202.5h1.6v1.6h-1.6zM864.9 202.5h1.6v1.6h-1.6zM876.9 202.5h1.6v1.6h-1.6zM888.9 202.5h1.6v1.6h-1.6zM900.9 202.5h1.6v1.6h-1.6zM912.9 202.5h1.6v1.6h-1.6zM924.9 202.5h1.6v1.6h-1.6zM36.9 262.5h1.6v1.6h-1.6zM48.9 262.5h1.6v1.6h-1.6zM60.9 262.5h1.6v1.6h-1.6zM72.9 262.5h1.6v1.6h-1.6zM84.9 262.5h1.6v1.6h-1.6zM96.9 262.5h1.6v1.6h-1.6zM108.9 262.5h1.6v1.6h-1.6zM120.9 262.5h1.6v1.6h-1.6zM132.9 262.5h1.6v1.6h-1.6zM144.9 262.5h1.6v1.6h-1.6zM156.9 262.5h1.6v1.6h-1.6zM168.9 262.5h1.6v1.6h-1.6zM180.9 262.5h1.6v1.6h-1.6zM192.9 262.5h1.6v1.6h-1.6zM204.9 262.5h1.6v1.6h-1.6zM216.9 262.5h1.6v1.6h-1.6zM228.9 262.5h1.6v1.6h-1.6zM240.9 262.5h1.6v1.6h-1.6zM252.9 262.5h1.6v1.6h-1.6zM264.9 262.5h1.6v1.6h-1.6zM276.9 262.5h1.6v1.6h-1.6zM288.9 262.5h1.6v1.6h-1.6zM300.9 262.5h1.6v1.6h-1.6zM312.9 262.5h1.6v1.6h-1.6zM324.9 262.5h1.6v1.6h-1.6zM336.9 262.5h1.6v1.6h-1.6zM348.9 262.5h1.6v1.6h-1.6zM360.9 262.5h1.6v1.6h-1.6zM372.9 262.5h1.6v1.6h-1.6zM384.9 262.5h1.6v1.6h-1.6zM396.9 262.5h1.6v1.6h-1.6zM408.9 262.5h1.6v1.6h-1.6zM420.9 262.5h1.6v1.6h-1.6zM432.9 262.5h1.6v1.6h-1.6zM444.9 262.5h1.6v1.6h-1.6zM456.9 262.5h1.6v1.6h-1.6zM468.9 262.5h1.6v1.6h-1.6zM480.9 262.5h1.6v1.6h-1.6zM492.9 262.5h1.6v1.6h-1.6zM504.9 262.5h1.6v1.6h-1.6zM516.9 262.5h1.6v1.6h-1.6zM528.9 262.5h1.6v1.6h-1.6zM540.9 262.5h1.6v1.6h-1.6zM552.9 262.5h1.6v1.6h-1.6zM564.9 262.5h1.6v1.6h-1.6zM576.9 262.5h1.6v1.6h-1.6zM588.9 262.5h1.6v1.6h-1.6zM600.9 262.5h1.6v1.6h-1.6zM612.9 262.5h1.6v1.6h-1.6zM624.9 262.5h1.6v1.6h-1.6zM636.9 262.5h1.6v1.6h-1.6zM648.9 262.5h1.6v1.6h-1.6zM660.9 262.5h1.6v1.6h-1.6zM672.9 262.5h1.6v1.6h-1.6zM684.9 262.5h1.6v1.6h-1.6zM696.9 262.5h1.6v1.6h-1.6zM708.9 262.5h1.6v1.6h-1.6zM720.9 262.5h1.6v1.6h-1.6zM732.9 262.5h1.6v1.6h-1.6zM744.9 262.5h1.6v1.6h-1.6zM756.9 262.5h1.6v1.6h-1.6zM768.9 262.5h1.6v1.6h-1.6zM780.9 262.5h1.6v1.6h-1.6zM792.9 262.5h1.6v1.6h-1.6zM804.9 262.5h1.6v1.6h-1.6zM816.9 262.5h1.6v1.6h-1.6zM828.9 262.5h1.6v1.6h-1.6zM840.9 262.5h1.6v1.6h-1.6zM852.9 262.5h1.6v1.6h-1.6zM864.9 262.5h1.6v1.6h-1.6zM876.9 262.5h1.6v1.6h-1.6zM888.9 262.5h1.6v1.6h-1.6zM900.9 262.5h1.6v1.6h-1.6zM912.9 262.5h1.6v1.6h-1.6zM924.9 262.5h1.6v1.6h-1.6zM36.9 382.5h1.6v1.6h-1.6zM48.9 382.5h1.6v1.6h-1.6zM60.9 382.5h1.6v1.6h-1.6zM72.9 382.5h1.6v1.6h-1.6zM84.9 382.5h1.6v1.6h-1.6zM96.9 382.5h1.6v1.6h-1.6zM108.9 382.5h1.6v1.6h-1.6zM120.9 382.5h1.6v1.6h-1.6zM132.9 382.5h1.6v1.6h-1.6zM144.9 382.5h1.6v1.6h-1.6zM156.9 382.5h1.6v1.6h-1.6zM168.9 382.5h1.6v1.6h-1.6zM180.9 382.5h1.6v1.6h-1.6zM192.9 382.5h1.6v1.6h-1.6zM204.9 382.5h1.6v1.6h-1.6zM216.9 382.5h1.6v1.6h-1.6zM228.9 382.5h1.6v1.6h-1.6zM240.9 382.5h1.6v1.6h-1.6zM252.9 382.5h1.6v1.6h-1.6zM264.9 382.5h1.6v1.6h-1.6zM276.9 382.5h1.6v1.6h-1.6zM288.9 382.5h1.6v1.6h-1.6zM300.9 382.5h1.6v1.6h-1.6zM312.9 382.5h1.6v1.6h-1.6zM324.9 382.5h1.6v1.6h-1.6zM336.9 382.5h1.6v1.6h-1.6zM348.9 382.5h1.6v1.6h-1.6zM360.9 382.5h1.6v1.6h-1.6zM372.9 382.5h1.6v1.6h-1.6zM384.9 382.5h1.6v1.6h-1.6zM396.9 382.5h1.6v1.6h-1.6zM408.9 382.5h1.6v1.6h-1.6zM420.9 382.5h1.6v1.6h-1.6zM432.9 382.5h1.6v1.6h-1.6zM444.9 382.5h1.6v1.6h-1.6zM456.9 382.5h1.6v1.6h-1.6zM468.9 382.5h1.6v1.6h-1.6zM480.9 382.5h1.6v1.6h-1.6zM492.9 382.5h1.6v1.6h-1.6zM504.9 382.5h1.6v1.6h-1.6zM516.9 382.5h1.6v1.6h-1.6zM528.9 382.5h1.6v1.6h-1.6zM540.9 382.5h1.6v1.6h-1.6zM552.9 382.5h1.6v1.6h-1.6zM564.9 382.5h1.6v1.6h-1.6zM576.9 382.5h1.6v1.6h-1.6zM588.9 382.5h1.6v1.6h-1.6zM600.9 382.5h1.6v1.6h-1.6zM612.9 382.5h1.6v1.6h-1.6zM624.9 382.5h1.6v1.6h-1.6zM636.9 382.5h1.6v1.6h-1.6zM648.9 382.5h1.6v1.6h-1.6zM660.9 382.5h1.6v1.6h-1.6zM672.9 382.5h1.6v1.6h-1.6zM684.9 382.5h1.6v1.6h-1.6zM696.9 382.5h1.6v1.6h-1.6zM708.9 382.5h1.6v1.6h-1.6zM720.9 382.5h1.6v1.6h-1.6zM732.9 382.5h1.6v1.6h-1.6zM744.9 382.5h1.6v1.6h-1.6zM756.9 382.5h1.6v1.6h-1.6zM768.9 382.5h1.6v1.6h-1.6zM780.9 382.5h1.6v1.6h-1.6zM792.9 382.5h1.6v1.6h-1.6zM804.9 382.5h1.6v1.6h-1.6zM816.9 382.5h1.6v1.6h-1.6zM828.9 382.5h1.6v1.6h-1.6zM840.9 382.5h1.6v1.6h-1.6zM852.9 382.5h1.6v1.6h-1.6zM864.9 382.5h1.6v1.6h-1.6zM876.9 382.5h1.6v1.6h-1.6zM888.9 382.5h1.6v1.6h-1.6zM900.9 382.5h1.6v1.6h-1.6zM912.9 382.5h1.6v1.6h-1.6zM924.9 382.5h1.6v1.6h-1.6zM36.9 442.5h1.6v1.6h-1.6zM48.9 442.5h1.6v1.6h-1.6zM60.9 442.5h1.6v1.6h-1.6zM72.9 442.5h1.6v1.6h-1.6zM84.9 442.5h1.6v1.6h-1.6zM96.9 442.5h1.6v1.6h-1.6zM108.9 442.5h1.6v1.6h-1.6zM120.9 442.5h1.6v1.6h-1.6zM132.9 442.5h1.6v1.6h-1.6zM144.9 442.5h1.6v1.6h-1.6zM156.9 442.5h1.6v1.6h-1.6zM168.9 442.5h1.6v1.6h-1.6zM180.9 442.5h1.6v1.6h-1.6zM192.9 442.5h1.6v1.6h-1.6zM204.9 442.5h1.6v1.6h-1.6zM216.9 442.5h1.6v1.6h-1.6zM228.9 442.5h1.6v1.6h-1.6zM240.9 442.5h1.6v1.6h-1.6zM252.9 442.5h1.6v1.6h-1.6zM264.9 442.5h1.6v1.6h-1.6zM276.9 442.5h1.6v1.6h-1.6zM288.9 442.5h1.6v1.6h-1.6zM300.9 442.5h1.6v1.6h-1.6zM312.9 442.5h1.6v1.6h-1.6zM324.9 442.5h1.6v1.6h-1.6zM336.9 442.5h1.6v1.6h-1.6zM348.9 442.5h1.6v1.6h-1.6zM360.9 442.5h1.6v1.6h-1.6zM372.9 442.5h1.6v1.6h-1.6zM384.9 442.5h1.6v1.6h-1.6zM396.9 442.5h1.6v1.6h-1.6zM408.9 442.5h1.6v1.6h-1.6zM420.9 442.5h1.6v1.6h-1.6zM432.9 442.5h1.6v1.6h-1.6zM444.9 442.5h1.6v1.6h-1.6zM456.9 442.5h1.6v1.6h-1.6zM468.9 442.5h1.6v1.6h-1.6zM480.9 442.5h1.6v1.6h-1.6zM492.9 442.5h1.6v1.6h-1.6zM504.9 442.5h1.6v1.6h-1.6zM516.9 442.5h1.6v1.6h-1.6zM528.9 442.5h1.6v1.6h-1.6zM540.9 442.5h1.6v1.6h-1.6zM552.9 442.5h1.6v1.6h-1.6zM564.9 442.5h1.6v1.6h-1.6zM576.9 442.5h1.6v1.6h-1.6zM588.9 442.5h1.6v1.6h-1.6zM600.9 442.5h1.6v1.6h-1.6zM612.9 442.5h1.6v1.6h-1.6zM624.9 442.5h1.6v1.6h-1.6zM636.9 442.5h1.6v1.6h-1.6zM648.9 442.5h1.6v1.6h-1.6zM660.9 442.5h1.6v1.6h-1.6zM672.9 442.5h1.6v1.6h-1.6zM684.9 442.5h1.6v1.6h-1.6zM696.9 442.5h1.6v1.6h-1.6zM708.9 442.5h1.6v1.6h-1.6zM720.9 442.5h1.6v1.6h-1.6zM732.9 442.5h1.6v1.6h-1.6zM744.9 442.5h1.6v1.6h-1.6zM756.9 442.5h1.6v1.6h-1.6zM768.9 442.5h1.6v1.6h-1.6zM780.9 442.5h1.6v1.6h-1.6zM792.9 442.5h1.6v1.6h-1.6zM804.9 442.5h1.6v1.6h-1.6zM816.9 442.5h1.6v1.6h-1.6zM828.9 442.5h1.6v1.6h-1.6zM840.9 442.5h1.6v1.6h-1.6zM852.9 442.5h1.6v1.6h-1.6zM864.9 442.5h1.6v1.6h-1.6zM876.9 442.5h1.6v1.6h-1.6zM888.9 442.5h1.6v1.6h-1.6zM900.9 442.5h1.6v1.6h-1.6zM912.9 442.5h1.6v1.6h-1.6zM924.9 442.5h1.6v1.6h-1.6zM36.9 502.5h1.6v1.6h-1.6zM48.9 502.5h1.6v1.6h-1.6zM60.9 502.5h1.6v1.6h-1.6zM72.9 502.5h1.6v1.6h-1.6zM84.9 502.5h1.6v1.6h-1.6zM96.9 502.5h1.6v1.6h-1.6zM108.9 502.5h1.6v1.6h-1.6zM120.9 502.5h1.6v1.6h-1.6zM132.9 502.5h1.6v1.6h-1.6zM144.9 502.5h1.6v1.6h-1.6zM156.9 502.5h1.6v1.6h-1.6zM168.9 502.5h1.6v1.6h-1.6zM180.9 502.5h1.6v1.6h-1.6zM192.9 502.5h1.6v1.6h-1.6zM204.9 502.5h1.6v1.6h-1.6zM216.9 502.5h1.6v1.6h-1.6zM228.9 502.5h1.6v1.6h-1.6zM240.9 502.5h1.6v1.6h-1.6zM252.9 502.5h1.6v1.6h-1.6zM264.9 502.5h1.6v1.6h-1.6zM276.9 502.5h1.6v1.6h-1.6zM288.9 502.5h1.6v1.6h-1.6zM300.9 502.5h1.6v1.6h-1.6zM312.9 502.5h1.6v1.6h-1.6zM324.9 502.5h1.6v1.6h-1.6zM336.9 502.5h1.6v1.6h-1.6zM348.9 502.5h1.6v1.6h-1.6zM360.9 502.5h1.6v1.6h-1.6zM372.9 502.5h1.6v1.6h-1.6zM384.9 502.5h1.6v1.6h-1.6zM396.9 502.5h1.6v1.6h-1.6zM408.9 502.5h1.6v1.6h-1.6zM420.9 502.5h1.6v1.6h-1.6zM432.9 502.5h1.6v1.6h-1.6zM444.9 502.5h1.6v1.6h-1.6zM456.9 502.5h1.6v1.6h-1.6zM468.9 502.5h1.6v1.6h-1.6zM480.9 502.5h1.6v1.6h-1.6zM492.9 502.5h1.6v1.6h-1.6zM504.9 502.5h1.6v1.6h-1.6zM516.9 502.5h1.6v1.6h-1.6zM528.9 502.5h1.6v1.6h-1.6zM540.9 502.5h1.6v1.6h-1.6zM552.9 502.5h1.6v1.6h-1.6zM564.9 502.5h1.6v1.6h-1.6zM576.9 502.5h1.6v1.6h-1.6zM588.9 502.5h1.6v1.6h-1.6zM600.9 502.5h1.6v1.6h-1.6zM612.9 502.5h1.6v1.6h-1.6zM624.9 502.5h1.6v1.6h-1.6zM636.9 502.5h1.6v1.6h-1.6zM648.9 502.5h1.6v1.6h-1.6zM660.9 502.5h1.6v1.6h-1.6zM672.9 502.5h1.6v1.6h-1.6zM684.9 502.5h1.6v1.6h-1.6zM696.9 502.5h1.6v1.6h-1.6zM708.9 502.5h1.6v1.6h-1.6zM720.9 502.5h1.6v1.6h-1.6zM732.9 502.5h1.6v1.6h-1.6zM744.9 502.5h1.6v1.6h-1.6zM756.9 502.5h1.6v1.6h-1.6zM768.9 502.5h1.6v1.6h-1.6zM780.9 502.5h1.6v1.6h-1.6zM792.9 502.5h1.6v1.6h-1.6zM804.9 502.5h1.6v1.6h-1.6zM816.9 502.5h1.6v1.6h-1.6zM828.9 502.5h1.6v1.6h-1.6zM840.9 502.5h1.6v1.6h-1.6zM852.9 502.5h1.6v1.6h-1.6zM864.9 502.5h1.6v1.6h-1.6zM876.9 502.5h1.6v1.6h-1.6zM888.9 502.5h1.6v1.6h-1.6zM900.9 502.5h1.6v1.6h-1.6zM912.9 502.5h1.6v1.6h-1.6zM924.9 502.5h1.6v1.6h-1.6zM36.9 562.5h1.6v1.6h-1.6zM48.9 562.5h1.6v1.6h-1.6zM60.9 562.5h1.6v1.6h-1.6zM72.9 562.5h1.6v1.6h-1.6zM84.9 562.5h1.6v1.6h-1.6zM96.9 562.5h1.6v1.6h-1.6zM108.9 562.5h1.6v1.6h-1.6zM120.9 562.5h1.6v1.6h-1.6zM132.9 562.5h1.6v1.6h-1.6zM144.9 562.5h1.6v1.6h-1.6zM156.9 562.5h1.6v1.6h-1.6zM168.9 562.5h1.6v1.6h-1.6zM180.9 562.5h1.6v1.6h-1.6zM192.9 562.5h1.6v1.6h-1.6zM204.9 562.5h1.6v1.6h-1.6zM216.9 562.5h1.6v1.6h-1.6zM228.9 562.5h1.6v1.6h-1.6zM240.9 562.5h1.6v1.6h-1.6zM252.9 562.5h1.6v1.6h-1.6zM264.9 562.5h1.6v1.6h-1.6zM276.9 562.5h1.6v1.6h-1.6zM288.9 562.5h1.6v1.6h-1.6zM300.9 562.5h1.6v1.6h-1.6zM312.9 562.5h1.6v1.6h-1.6zM324.9 562.5h1.6v1.6h-1.6zM336.9 562.5h1.6v1.6h-1.6zM348.9 562.5h1.6v1.6h-1.6zM360.9 562.5h1.6v1.6h-1.6zM372.9 562.5h1.6v1.6h-1.6zM384.9 562.5h1.6v1.6h-1.6zM396.9 562.5h1.6v1.6h-1.6zM408.9 562.5h1.6v1.6h-1.6zM420.9 562.5h1.6v1.6h-1.6zM432.9 562.5h1.6v1.6h-1.6zM444.9 562.5h1.6v1.6h-1.6zM456.9 562.5h1.6v1.6h-1.6zM468.9 562.5h1.6v1.6h-1.6zM480.9 562.5h1.6v1.6h-1.6zM492.9 562.5h1.6v1.6h-1.6zM504.9 562.5h1.6v1.6h-1.6zM516.9 562.5h1.6v1.6h-1.6zM528.9 562.5h1.6v1.6h-1.6zM540.9 562.5h1.6v1.6h-1.6zM552.9 562.5h1.6v1.6h-1.6zM564.9 562.5h1.6v1.6h-1.6zM576.9 562.5h1.6v1.6h-1.6zM588.9 562.5h1.6v1.6h-1.6zM600.9 562.5h1.6v1.6h-1.6zM612.9 562.5h1.6v1.6h-1.6zM624.9 562.5h1.6v1.6h-1.6zM636.9 562.5h1.6v1.6h-1.6zM648.9 562.5h1.6v1.6h-1.6zM660.9 562.5h1.6v1.6h-1.6zM672.9 562.5h1.6v1.6h-1.6zM684.9 562.5h1.6v1.6h-1.6zM696.9 562.5h1.6v1.6h-1.6zM708.9 562.5h1.6v1.6h-1.6zM720.9 562.5h1.6v1.6h-1.6zM732.9 562.5h1.6v1.6h-1.6zM744.9 562.5h1.6v1.6h-1.6zM756.9 562.5h1.6v1.6h-1.6zM768.9 562.5h1.6v1.6h-1.6zM780.9 562.5h1.6v1.6h-1.6zM792.9 562.5h1.6v1.6h-1.6zM804.9 562.5h1.6v1.6h-1.6zM816.9 562.5h1.6v1.6h-1.6zM828.9 562.5h1.6v1.6h-1.6zM840.9 562.5h1.6v1.6h-1.6zM852.9 562.5h1.6v1.6h-1.6zM864.9 562.5h1.6v1.6h-1.6zM876.9 562.5h1.6v1.6h-1.6zM888.9 562.5h1.6v1.6h-1.6zM900.9 562.5h1.6v1.6h-1.6zM912.9 562.5h1.6v1.6h-1.6zM924.9 562.5h1.6v1.6h-1.6z" fill="#949494"/>
<path d="M37.0 321.3h1.4v4h-1.4zM49.0 321.3h1.4v4h-1.4zM61.0 321.3h1.4v4h-1.4zM73.0 321.3h1.4v4h-1.4zM85.0 321.3h1.4v4h-1.4zM97.0 321.3h1.4v4h-1.4zM109.0 321.3h1.4v4h-1.4zM121.0 321.3h1.4v4h-1.4zM133.0 321.3h1.4v4h-1.4zM145.0 321.3h1.4v4h-1.4zM157.0 321.3h1.4v4h-1.4zM169.0 321.3h1.4v4h-1.4zM181.0 321.3h1.4v4h-1.4zM193.0 321.3h1.4v4h-1.4zM205.0 321.3h1.4v4h-1.4zM217.0 321.3h1.4v4h-1.4zM229.0 321.3h1.4v4h-1.4zM241.0 321.3h1.4v4h-1.4zM253.0 321.3h1.4v4h-1.4zM265.0 321.3h1.4v4h-1.4zM277.0 321.3h1.4v4h-1.4zM289.0 321.3h1.4v4h-1.4zM301.0 321.3h1.4v4h-1.4zM313.0 321.3h1.4v4h-1.4zM325.0 321.3h1.4v4h-1.4zM337.0 321.3h1.4v4h-1.4zM349.0 321.3h1.4v4h-1.4zM361.0 321.3h1.4v4h-1.4zM373.0 321.3h1.4v4h-1.4zM385.0 321.3h1.4v4h-1.4zM397.0 321.3h1.4v4h-1.4zM409.0 321.3h1.4v4h-1.4zM421.0 321.3h1.4v4h-1.4zM433.0 321.3h1.4v4h-1.4zM445.0 321.3h1.4v4h-1.4zM457.0 321.3h1.4v4h-1.4zM469.0 321.3h1.4v4h-1.4zM493.0 321.3h1.4v4h-1.4zM505.0 321.3h1.4v4h-1.4zM517.0 321.3h1.4v4h-1.4zM529.0 321.3h1.4v4h-1.4zM541.0 321.3h1.4v4h-1.4zM553.0 321.3h1.4v4h-1.4zM565.0 321.3h1.4v4h-1.4zM577.0 321.3h1.4v4h-1.4zM589.0 321.3h1.4v4h-1.4zM601.0 321.3h1.4v4h-1.4zM613.0 321.3h1.4v4h-1.4zM625.0 321.3h1.4v4h-1.4zM637.0 321.3h1.4v4h-1.4zM649.0 321.3h1.4v4h-1.4zM661.0 321.3h1.4v4h-1.4zM673.0 321.3h1.4v4h-1.4zM685.0 321.3h1.4v4h-1.4zM697.0 321.3h1.4v4h-1.4zM709.0 321.3h1.4v4h-1.4zM721.0 321.3h1.4v4h-1.4zM733.0 321.3h1.4v4h-1.4zM745.0 321.3h1.4v4h-1.4zM757.0 321.3h1.4v4h-1.4zM769.0 321.3h1.4v4h-1.4zM781.0 321.3h1.4v4h-1.4zM793.0 321.3h1.4v4h-1.4zM805.0 321.3h1.4v4h-1.4zM817.0 321.3h1.4v4h-1.4zM829.0 321.3h1.4v4h-1.4zM841.0 321.3h1.4v4h-1.4zM853.0 321.3h1.4v4h-1.4zM865.0 321.3h1.4v4h-1.4zM877.0 321.3h1.4v4h-1.4zM889.0 321.3h1.4v4h-1.4zM901.0 321.3h1.4v4h-1.4zM913.0 321.3h1.4v4h-1.4zM925.0 321.3h1.4v4h-1.4zM479.7 34.6h4v1.4h-4zM479.7 46.6h4v1.4h-4zM479.7 58.6h4v1.4h-4zM479.7 70.6h4v1.4h-4zM479.7 82.6h4v1.4h-4zM479.7 94.6h4v1.4h-4zM479.7 106.6h4v1.4h-4zM479.7 118.6h4v1.4h-4zM479.7 130.6h4v1.4h-4zM479.7 142.6h4v1.4h-4zM479.7 154.6h4v1.4h-4zM479.7 166.6h4v1.4h-4zM479.7 178.6h4v1.4h-4zM479.7 190.6h4v1.4h-4zM479.7 202.6h4v1.4h-4zM479.7 214.6h4v1.4h-4zM479.7 226.6h4v1.4h-4zM479.7 238.6h4v1.4h-4zM479.7 250.6h4v1.4h-4zM479.7 262.6h4v1.4h-4zM479.7 274.6h4v1.4h-4zM479.7 286.6h4v1.4h-4zM479.7 298.6h4v1.4h-4zM479.7 310.6h4v1.4h-4zM479.7 334.6h4v1.4h-4zM479.7 346.6h4v1.4h-4zM479.7 358.6h4v1.4h-4zM479.7 370.6h4v1.4h-4zM479.7 382.6h4v1.4h-4zM479.7 394.6h4v1.4h-4zM479.7 406.6h4v1.4h-4zM479.7 418.6h4v1.4h-4zM479.7 430.6h4v1.4h-4zM479.7 442.6h4v1.4h-4zM479.7 454.6h4v1.4h-4zM479.7 466.6h4v1.4h-4zM479.7 478.6h4v1.4h-4zM479.7 490.6h4v1.4h-4zM479.7 502.6h4v1.4h-4zM479.7 514.6h4v1.4h-4zM479.7 526.6h4v1.4h-4zM479.7 538.6h4v1.4h-4zM479.7 550.6h4v1.4h-4zM479.7 562.6h4v1.4h-4zM479.7 574.6h4v1.4h-4zM479.7 586.6h4v1.4h-4zM479.7 598.6h4v1.4h-4zM479.7 610.6h4v1.4h-4z" fill="#d8d8d8"/>
<rect x="480.2" y="321.8" width="3" height="3" fill="#f0f0f0"/>
<path d="M174.7 322.65000000000003h14v1.3h-14z M181.04999999999998 316.3h1.3v14h-1.3z" fill="#e8e8e8"/>
<path d="M774.7 322.65000000000003h14v1.3h-14z M781.0500000000001 316.3h1.3v14h-1.3z" fill="#e8e8e8"/>
<path d="M36.9 25h1.6v2.0h-1.6zM36.9 618.5h1.6v2.0h-1.6zM48.9 25h1.6v2.0h-1.6zM48.9 618.5h1.6v2.0h-1.6zM60.9 25h1.6v5.0h-1.6zM60.9 615.5h1.6v5.0h-1.6zM72.9 25h1.6v2.0h-1.6zM72.9 618.5h1.6v2.0h-1.6zM84.9 25h1.6v2.0h-1.6zM84.9 618.5h1.6v2.0h-1.6zM96.9 25h1.6v2.0h-1.6zM96.9 618.5h1.6v2.0h-1.6zM108.9 25h1.6v2.0h-1.6zM108.9 618.5h1.6v2.0h-1.6zM120.9 25h1.6v5.0h-1.6zM120.9 615.5h1.6v5.0h-1.6zM132.9 25h1.6v2.0h-1.6zM132.9 618.5h1.6v2.0h-1.6zM144.9 25h1.6v2.0h-1.6zM144.9 618.5h1.6v2.0h-1.6zM156.9 25h1.6v2.0h-1.6zM156.9 618.5h1.6v2.0h-1.6zM168.9 25h1.6v2.0h-1.6zM168.9 618.5h1.6v2.0h-1.6zM180.9 25h1.6v5.0h-1.6zM180.9 615.5h1.6v5.0h-1.6zM192.9 25h1.6v2.0h-1.6zM192.9 618.5h1.6v2.0h-1.6zM204.9 25h1.6v2.0h-1.6zM204.9 618.5h1.6v2.0h-1.6zM216.9 25h1.6v2.0h-1.6zM216.9 618.5h1.6v2.0h-1.6zM228.9 25h1.6v2.0h-1.6zM228.9 618.5h1.6v2.0h-1.6zM240.9 25h1.6v5.0h-1.6zM240.9 615.5h1.6v5.0h-1.6zM252.9 25h1.6v2.0h-1.6zM252.9 618.5h1.6v2.0h-1.6zM264.9 25h1.6v2.0h-1.6zM264.9 618.5h1.6v2.0h-1.6zM276.9 25h1.6v2.0h-1.6zM276.9 618.5h1.6v2.0h-1.6zM288.9 25h1.6v2.0h-1.6zM288.9 618.5h1.6v2.0h-1.6zM300.9 25h1.6v5.0h-1.6zM300.9 615.5h1.6v5.0h-1.6zM312.9 25h1.6v2.0h-1.6zM312.9 618.5h1.6v2.0h-1.6zM324.9 25h1.6v2.0h-1.6zM324.9 618.5h1.6v2.0h-1.6zM336.9 25h1.6v2.0h-1.6zM336.9 618.5h1.6v2.0h-1.6zM348.9 25h1.6v2.0h-1.6zM348.9 618.5h1.6v2.0h-1.6zM360.9 25h1.6v5.0h-1.6zM360.9 615.5h1.6v5.0h-1.6zM372.9 25h1.6v2.0h-1.6zM372.9 618.5h1.6v2.0h-1.6zM384.9 25h1.6v2.0h-1.6zM384.9 618.5h1.6v2.0h-1.6zM396.9 25h1.6v2.0h-1.6zM396.9 618.5h1.6v2.0h-1.6zM408.9 25h1.6v2.0h-1.6zM408.9 618.5h1.6v2.0h-1.6zM420.9 25h1.6v5.0h-1.6zM420.9 615.5h1.6v5.0h-1.6zM432.9 25h1.6v2.0h-1.6zM432.9 618.5h1.6v2.0h-1.6zM444.9 25h1.6v2.0h-1.6zM444.9 618.5h1.6v2.0h-1.6zM456.9 25h1.6v2.0h-1.6zM456.9 618.5h1.6v2.0h-1.6zM468.9 25h1.6v2.0h-1.6zM468.9 618.5h1.6v2.0h-1.6zM480.9 25h1.6v5.0h-1.6zM480.9 615.5h1.6v5.0h-1.6zM492.9 25h1.6v2.0h-1.6zM492.9 618.5h1.6v2.0h-1.6zM504.9 25h1.6v2.0h-1.6zM504.9 618.5h1.6v2.0h-1.6zM516.9 25h1.6v2.0h-1.6zM516.9 618.5h1.6v2.0h-1.6zM528.9 25h1.6v2.0h-1.6zM528.9 618.5h1.6v2.0h-1.6zM540.9 25h1.6v5.0h-1.6zM540.9 615.5h1.6v5.0h-1.6zM552.9 25h1.6v2.0h-1.6zM552.9 618.5h1.6v2.0h-1.6zM564.9 25h1.6v2.0h-1.6zM564.9 618.5h1.6v2.0h-1.6zM576.9 25h1.6v2.0h-1.6zM576.9 618.5h1.6v2.0h-1.6zM588.9 25h1.6v2.0h-1.6zM588.9 618.5h1.6v2.0h-1.6zM600.9 25h1.6v5.0h-1.6zM600.9 615.5h1.6v5.0h-1.6zM612.9 25h1.6v2.0h-1.6zM612.9 618.5h1.6v2.0h-1.6zM624.9 25h1.6v2.0h-1.6zM624.9 618.5h1.6v2.0h-1.6zM636.9 25h1.6v2.0h-1.6zM636.9 618.5h1.6v2.0h-1.6zM648.9 25h1.6v2.0h-1.6zM648.9 618.5h1.6v2.0h-1.6zM660.9 25h1.6v5.0h-1.6zM660.9 615.5h1.6v5.0h-1.6zM672.9 25h1.6v2.0h-1.6zM672.9 618.5h1.6v2.0h-1.6zM684.9 25h1.6v2.0h-1.6zM684.9 618.5h1.6v2.0h-1.6zM696.9 25h1.6v2.0h-1.6zM696.9 618.5h1.6v2.0h-1.6zM708.9 25h1.6v2.0h-1.6zM708.9 618.5h1.6v2.0h-1.6zM720.9 25h1.6v5.0h-1.6zM720.9 615.5h1.6v5.0h-1.6zM732.9 25h1.6v2.0h-1.6zM732.9 618.5h1.6v2.0h-1.6zM744.9 25h1.6v2.0h-1.6zM744.9 618.5h1.6v2.0h-1.6zM756.9 25h1.6v2.0h-1.6zM756.9 618.5h1.6v2.0h-1.6zM768.9 25h1.6v2.0h-1.6zM768.9 618.5h1.6v2.0h-1.6zM780.9 25h1.6v5.0h-1.6zM780.9 615.5h1.6v5.0h-1.6zM792.9 25h1.6v2.0h-1.6zM792.9 618.5h1.6v2.0h-1.6zM804.9 25h1.6v2.0h-1.6zM804.9 618.5h1.6v2.0h-1.6zM816.9 25h1.6v2.0h-1.6zM816.9 618.5h1.6v2.0h-1.6zM828.9 25h1.6v2.0h-1.6zM828.9 618.5h1.6v2.0h-1.6zM840.9 25h1.6v5.0h-1.6zM840.9 615.5h1.6v5.0h-1.6zM852.9 25h1.6v2.0h-1.6zM852.9 618.5h1.6v2.0h-1.6zM864.9 25h1.6v2.0h-1.6zM864.9 618.5h1.6v2.0h-1.6zM876.9 25h1.6v2.0h-1.6zM876.9 618.5h1.6v2.0h-1.6zM888.9 25h1.6v2.0h-1.6zM888.9 618.5h1.6v2.0h-1.6zM900.9 25h1.6v5.0h-1.6zM900.9 615.5h1.6v5.0h-1.6zM912.9 25h1.6v2.0h-1.6zM912.9 618.5h1.6v2.0h-1.6zM924.9 25h1.6v2.0h-1.6zM924.9 618.5h1.6v2.0h-1.6zM26 34.5h4v1.6h-4zM930 34.5h4v1.6h-4zM26 46.5h4v1.6h-4zM930 46.5h4v1.6h-4zM26 58.5h4v1.6h-4zM930 58.5h4v1.6h-4zM26 70.5h4v1.6h-4zM930 70.5h4v1.6h-4zM26 82.5h8v1.6h-8zM926 82.5h8v1.6h-8zM26 94.5h4v1.6h-4zM930 94.5h4v1.6h-4zM26 106.5h4v1.6h-4zM930 106.5h4v1.6h-4zM26 118.5h4v1.6h-4zM930 118.5h4v1.6h-4zM26 130.5h4v1.6h-4zM930 130.5h4v1.6h-4zM26 142.5h8v1.6h-8zM926 142.5h8v1.6h-8zM26 154.5h4v1.6h-4zM930 154.5h4v1.6h-4zM26 166.5h4v1.6h-4zM930 166.5h4v1.6h-4zM26 178.5h4v1.6h-4zM930 178.5h4v1.6h-4zM26 190.5h4v1.6h-4zM930 190.5h4v1.6h-4zM26 202.5h8v1.6h-8zM926 202.5h8v1.6h-8zM26 214.5h4v1.6h-4zM930 214.5h4v1.6h-4zM26 226.5h4v1.6h-4zM930 226.5h4v1.6h-4zM26 238.5h4v1.6h-4zM930 238.5h4v1.6h-4zM26 250.5h4v1.6h-4zM930 250.5h4v1.6h-4zM26 262.5h8v1.6h-8zM926 262.5h8v1.6h-8zM26 274.5h4v1.6h-4zM930 274.5h4v1.6h-4zM26 286.5h4v1.6h-4zM930 286.5h4v1.6h-4zM26 298.5h4v1.6h-4zM930 298.5h4v1.6h-4zM26 310.5h4v1.6h-4zM930 310.5h4v1.6h-4zM26 322.5h8v1.6h-8zM926 322.5h8v1.6h-8zM26 334.5h4v1.6h-4zM930 334.5h4v1.6h-4zM26 346.5h4v1.6h-4zM930 346.5h4v1.6h-4zM26 358.5h4v1.6h-4zM930 358.5h4v1.6h-4zM26 370.5h4v1.6h-4zM930 370.5h4v1.6h-4zM26 382.5h8v1.6h-8zM926 382.5h8v1.6h-8zM26 394.5h4v1.6h-4zM930 394.5h4v1.6h-4zM26 406.5h4v1.6h-4zM930 406.5h4v1.6h-4zM26 418.5h4v1.6h-4zM930 418.5h4v1.6h-4zM26 430.5h4v1.6h-4zM930 430.5h4v1.6h-4zM26 442.5h8v1.6h-8zM926 442.5h8v1.6h-8zM26 454.5h4v1.6h-4zM930 454.5h4v1.6h-4zM26 466.5h4v1.6h-4zM930 466.5h4v1.6h-4zM26 478.5h4v1.6h-4zM930 478.5h4v1.6h-4zM26 490.5h4v1.6h-4zM930 490.5h4v1.6h-4zM26 502.5h8v1.6h-8zM926 502.5h8v1.6h-8zM26 514.5h4v1.6h-4zM930 514.5h4v1.6h-4zM26 526.5h4v1.6h-4zM930 526.5h4v1.6h-4zM26 538.5h4v1.6h-4zM930 538.5h4v1.6h-4zM26 550.5h4v1.6h-4zM930 550.5h4v1.6h-4zM26 562.5h8v1.6h-8zM926 562.5h8v1.6h-8zM26 574.5h4v1.6h-4zM930 574.5h4v1.6h-4zM26 586.5h4v1.6h-4zM930 586.5h4v1.6h-4zM26 598.5h4v1.6h-4zM930 598.5h4v1.6h-4zM26 610.5h4v1.6h-4zM930 610.5h4v1.6h-4z" fill="#dcdcdc"/>
<rect x="25" y="24" width="910" height="597.5" fill="none" stroke="#f4f4f4" stroke-width="2"/>
<rect x="26" y="202.2" width="908" height="5.800000000000011" fill="#ecec08"/>
<path d="M34.0 202h1.2v3.0h-1.2zM37.0 202h1.2v3.2h-1.2zM41.0 202h1.5v3.2h-1.5zM44.0 202h1.8v2.6h-1.8zM47.0 202h1.2v3.0h-1.2zM56.0 202h1.2v2.6h-1.2zM60.0 202h1.8v3.0h-1.8zM63.0 202h1.8v2.6h-1.8zM68.0 202h1.8v3.2h-1.8zM71.0 202h1.8v3.2h-1.8zM80.0 202h1.2v2.6h-1.2zM83.0 202h1.8v2.6h-1.8zM89.0 202h1.5v2.6h-1.5zM107.0 202h1.2v3.2h-1.2zM113.0 202h1.8v3.2h-1.8zM118.0 202h1.2v3.2h-1.2zM123.0 202h1.5v2.6h-1.5zM141.0 202h1.8v2.6h-1.8zM144.0 202h1.8v2.6h-1.8zM156.0 202h1.8v3.2h-1.8zM165.0 202h1.5v3.0h-1.5zM177.0 202h1.5v3.0h-1.5zM182.0 202h1.2v3.2h-1.2zM187.0 202h1.2v3.2h-1.2zM193.0 202h1.8v3.0h-1.8zM200.0 202h1.8v3.0h-1.8zM206.0 202h1.8v2.6h-1.8zM210.0 202h1.8v3.0h-1.8zM215.0 202h1.5v2.6h-1.5zM227.0 202h1.5v2.6h-1.5zM231.0 202h1.8v3.2h-1.8zM238.0 202h1.5v3.2h-1.5zM245.0 202h1.8v3.0h-1.8zM257.0 202h1.2v2.6h-1.2zM263.0 202h1.5v3.2h-1.5zM267.0 202h1.2v3.2h-1.2zM273.0 202h1.8v3.2h-1.8zM285.0 202h1.5v3.2h-1.5zM294.0 202h1.8v3.0h-1.8zM297.0 202h1.5v3.0h-1.5zM302.0 202h1.8v2.6h-1.8zM314.0 202h1.2v2.6h-1.2zM320.0 202h1.2v3.2h-1.2zM325.0 202h1.5v3.0h-1.5zM337.0 202h1.2v2.6h-1.2zM349.0 202h1.5v3.2h-1.5zM355.0 202h1.2v3.0h-1.2zM373.0 202h1.5v3.2h-1.5zM382.0 202h1.5v3.2h-1.5zM391.0 202h1.2v2.6h-1.2zM395.0 202h1.2v2.6h-1.2zM400.0 202h1.8v2.6h-1.8zM403.0 202h1.5v3.2h-1.5zM408.0 202h1.5v3.0h-1.5zM411.0 202h1.2v3.0h-1.2zM429.0 202h1.5v3.2h-1.5zM436.0 202h1.2v3.2h-1.2zM454.0 202h1.8v3.2h-1.8zM457.0 202h1.5v3.2h-1.5zM475.0 202h1.5v3.0h-1.5zM484.0 202h1.5v2.6h-1.5zM496.0 202h1.8v3.0h-1.8zM499.0 202h1.2v2.6h-1.2zM504.0 202h1.5v2.6h-1.5zM508.0 202h1.5v3.2h-1.5zM511.0 202h1.2v2.6h-1.2zM516.0 202h1.8v2.6h-1.8zM523.0 202h1.8v2.6h-1.8zM527.0 202h1.2v3.2h-1.2zM536.0 202h1.2v3.2h-1.2zM542.0 202h1.5v3.2h-1.5zM549.0 202h1.5v2.6h-1.5zM553.0 202h1.5v3.0h-1.5zM565.0 202h1.5v3.0h-1.5zM569.0 202h1.2v2.6h-1.2zM576.0 202h1.8v3.0h-1.8zM588.0 202h1.8v2.6h-1.8zM606.0 202h1.2v2.6h-1.2zM624.0 202h1.5v2.6h-1.5zM642.0 202h1.2v3.2h-1.2zM648.0 202h1.8v2.6h-1.8zM654.0 202h1.8v3.0h-1.8zM659.0 202h1.5v2.6h-1.5zM677.0 202h1.8v3.2h-1.8zM684.0 202h1.8v2.6h-1.8zM689.0 202h1.2v3.0h-1.2zM694.0 202h1.2v3.2h-1.2zM706.0 202h1.5v3.2h-1.5zM709.0 202h1.2v3.0h-1.2zM721.0 202h1.5v2.6h-1.5zM728.0 202h1.5v3.2h-1.5zM735.0 202h1.5v2.6h-1.5zM740.0 202h1.2v2.6h-1.2zM752.0 202h1.2v3.0h-1.2zM757.0 202h1.5v3.2h-1.5zM760.0 202h1.5v3.2h-1.5zM767.0 202h1.8v2.6h-1.8zM771.0 202h1.5v3.2h-1.5zM776.0 202h1.5v2.6h-1.5zM785.0 202h1.8v3.0h-1.8zM789.0 202h1.8v3.0h-1.8zM801.0 202h1.5v3.2h-1.5zM805.0 202h1.8v2.6h-1.8zM810.0 202h1.2v2.6h-1.2zM815.0 202h1.8v3.0h-1.8zM820.0 202h1.8v3.2h-1.8zM832.0 202h1.8v3.0h-1.8zM837.0 202h1.8v3.2h-1.8zM842.0 202h1.2v2.6h-1.2zM846.0 202h1.8v3.2h-1.8zM851.0 202h1.5v2.6h-1.5zM856.0 202h1.2v3.0h-1.2zM861.0 202h1.5v3.2h-1.5zM866.0 202h1.8v3.0h-1.8zM872.0 202h1.8v3.0h-1.8zM877.0 202h1.2v3.2h-1.2zM884.0 202h1.5v3.2h-1.5zM902.0 202h1.5v3.2h-1.5zM907.0 202h1.8v2.6h-1.8zM925.0 202h1.8v2.6h-1.8z" fill="#000"/>
<path d="M577.7 200.2h1.2v2.2h-1.2zM728.4 200.2h1.2v2.2h-1.2zM164.8 200.2h1.2v2.2h-1.2zM157.4 200.2h1.2v2.2h-1.2zM587.2 200.2h1.2v2.2h-1.2zM138.3 200.2h1.2v2.2h-1.2zM85.6 200.2h1.2v2.2h-1.2zM644.1 200.2h1.2v2.2h-1.2zM507.7 200.2h1.2v2.2h-1.2zM464.2 200.2h1.2v2.2h-1.2zM728.8 200.2h1.2v2.2h-1.2zM824.9 200.2h1.2v2.2h-1.2zM81.1 200.2h1.2v2.2h-1.2zM202.2 200.2h1.2v2.2h-1.2zM68.0 200.2h1.2v2.2h-1.2zM118.0 200.2h1.2v2.2h-1.2zM437.0 200.2h1.2v2.2h-1.2zM55.1 200.2h1.2v2.2h-1.2z" fill="#d8d820"/>
<path d="M834.6 208h1v1.8h-1zM87.0 208h1v1.8h-1zM323.1 208h1v1.8h-1zM906.0 208h1v1.8h-1zM575.5 208h1v1.8h-1zM209.5 208h1v1.8h-1zM279.5 208h1v1.8h-1zM487.3 208h1v1.8h-1zM756.6 208h1v1.8h-1zM487.0 208h1v1.8h-1zM252.9 208h1v1.8h-1zM500.9 208h1v1.8h-1zM818.4 208h1v1.8h-1zM865.0 208h1v1.8h-1z" fill="#c8c8a0"/>
<path d="M25 24.5 H33.5 V37 L30 40.5 H25 Z" fill="#1a0030" stroke="#8a30d0" stroke-width="1.6"/>
<path d="M24.8 28.8 H31 V30.4 H26.4 V37.5 H24.8 Z" fill="#c040e0"/>
<path d="M0.5 313.5 H17 L23.5 323.5 L17 333.5 H0.5 Z" fill="#000" stroke="#c8d820" stroke-width="1.6"/>
<text x="10" y="330" fill="#e0e020" font-size="18" text-anchor="middle">2</text>
<path d="M937 323.5 L952 317.5 V329.5 Z" fill="#b020d8"/>
<rect x="0" y="622.5" width="383" height="97.5" fill="#0080e0"/>
<rect x="0" y="646.6" width="252" height="1.6000000000000227" fill="#3a6a80"/>
<rect x="250.5" y="623" width="3.0" height="48" fill="#7cbfcc"/>
<rect x="0" y="671" width="383" height="2.5" fill="#7cbfcc"/>
<rect x="0" y="716.5" width="383" height="3.5" fill="#7cbfcc"/>
<rect x="0" y="623" width="1.5" height="97" fill="#60a8b8"/>
<rect x="380" y="623" width="3" height="97" fill="#7cbfcc"/>
<rect x="1.5" y="623.5" width="248.5" height="23.100000000000023" rx="4" ry="4" fill="#000"/>
<rect x="1.5" y="648.2" width="248.5" height="22.299999999999955" rx="4" ry="4" fill="#000"/>
<rect x="253.5" y="623" width="126.5" height="47.5" rx="5" ry="5" fill="#000"/>
<rect x="1.5" y="673.5" width="378.5" height="43.0" rx="5" ry="5" fill="#000"/>
<circle cx="12" cy="636" r="9.8" fill="#f01010"/>
<path d="M8.40 632.80 L12.60 629.20 V642.80" fill="none" stroke="#000" stroke-width="2.6" stroke-linejoin="miter"/>
<text style="white-space:pre" x="25.03 38.08 51.12" y="643.7" fill="#c21c1c" font-size="18" font-weight="normal" stroke="#000" stroke-width="0.2"  transform="scale(0.92 1)">5V-</text>
<text style="white-space:pre" x="138.08 151.12 164.17 177.21 190.25 203.30 216.34" y="643.5" fill="#c21c1c" font-size="18" font-weight="normal" stroke="#000" stroke-width="0.2"  transform="scale(0.92 1)"> .  div</text>
<rect x="128.00" y="632.10" width="5.6" height="10.8" rx="2.9" ry="3.4" fill="none" stroke="#c21c1c" stroke-width="1.25"/>
<rect x="152.00" y="632.10" width="5.6" height="10.8" rx="2.9" ry="3.4" fill="none" stroke="#c21c1c" stroke-width="1.25"/>
<rect x="164.00" y="632.10" width="5.6" height="10.8" rx="2.9" ry="3.4" fill="none" stroke="#c21c1c" stroke-width="1.25"/>
<circle cx="12" cy="659.8" r="9.8" fill="#e8e020"/>
<text x="12" y="666.5999999999999" fill="#000" font-size="19.5" font-weight="bold" text-anchor="middle">2</text>
<text style="white-space:pre" x="25.03 38.08 51.12" y="667" fill="#c8c828" font-size="18" font-weight="normal" stroke="#000" stroke-width="0.2"  transform="scale(0.92 1)">2V-</text>
<text style="white-space:pre" x="138.08 151.12 164.17 177.21 190.25 203.30 216.34" y="667" fill="#c8c828" font-size="18" font-weight="normal" stroke="#000" stroke-width="0.2"  transform="scale(0.92 1)"> .  div</text>
<rect x="128.00" y="655.60" width="5.6" height="10.8" rx="2.9" ry="3.4" fill="none" stroke="#c8c828" stroke-width="1.25"/>
<rect x="152.00" y="655.60" width="5.6" height="10.8" rx="2.9" ry="3.4" fill="none" stroke="#c8c828" stroke-width="1.25"/>
<rect x="164.00" y="655.60" width="5.6" height="10.8" rx="2.9" ry="3.4" fill="none" stroke="#c8c828" stroke-width="1.25"/>
<text style="white-space:pre" x="292.43 305.47 318.51 331.56 344.60 357.64 370.69 383.73" y="640.5" fill="#e0e0e0" font-size="18" font-weight="normal" stroke="#000" stroke-width="0.2"  transform="scale(0.92 1)">(25KS/s)</text>
<text style="white-space:pre" x="284.82 297.86 310.90 323.95 336.99 350.03 363.08 376.12 389.17" y="664.5" fill="#e0e0e0" font-size="18" font-weight="normal" stroke="#000" stroke-width="0.2"  transform="scale(0.92 1)">Depth:1 K</text>
<rect x="347.00" y="653.10" width="5.6" height="10.8" rx="2.9" ry="3.4" fill="none" stroke="#e0e0e0" stroke-width="1.25"/>
<circle cx="11" cy="683.5" r="9.8" fill="#e8e020"/>
<text x="11" y="690.3" fill="#000" font-size="19.5" font-weight="bold" text-anchor="middle">2</text>
<circle cx="11" cy="706.5" r="9.8" fill="#e8e020"/>
<text x="11" y="713.3" fill="#000" font-size="19.5" font-weight="bold" text-anchor="middle">2</text>
<text style="white-space:pre" x="27.75 40.80 53.84 66.88 79.93" y="690.2" fill="#c8c828" font-size="18" font-weight="normal" stroke="#000" stroke-width="0.2"  transform="scale(0.92 1)">F:  ?</text>
<text style="white-space:pre" x="27.75 40.80 53.84 66.88 79.93 92.97" y="712.7" fill="#c8c828" font-size="18" font-weight="normal" stroke="#000" stroke-width="0.2"  transform="scale(0.92 1)">+D:  ?</text>
<circle cx="202.4" cy="683.5" r="9.8" fill="#e8e020"/>
<text x="202.4" y="690.3" fill="#000" font-size="19.5" font-weight="bold" text-anchor="middle">2</text>
<circle cx="202.4" cy="706.5" r="9.8" fill="#e8e020"/>
<text x="202.4" y="713.3" fill="#000" font-size="19.5" font-weight="bold" text-anchor="middle">2</text>
<text style="white-space:pre" x="235.69 248.73 261.77 274.82 287.86 300.90 313.95 326.99 340.03" y="690.2" fill="#c8c828" font-size="18" font-weight="normal" stroke="#000" stroke-width="0.2"  transform="scale(0.92 1)">Vk:3.945v</text>
<text style="white-space:pre" x="235.69 248.73 261.77 274.82 287.86 300.90 313.95 326.99" y="712.7" fill="#c8c828" font-size="18" font-weight="normal" stroke="#000" stroke-width="0.2"  transform="scale(0.92 1)">V:3.945v</text>
<rect x="383" y="645.5" width="575" height="71.0" fill="#0262a2"/>
<rect x="383" y="622.8" width="119" height="22.700000000000045" rx="11.350000000000023" ry="11.350000000000023" fill="#000"/>
<text style="white-space:pre" x="440.25 453.30 466.34 479.38 492.43 505.47" y="641" fill="#e8e8e8" font-size="18" font-weight="normal" stroke="#000" stroke-width="0.2"  transform="scale(0.92 1)">M:2 ms</text>
<rect x="442.00" y="629.60" width="5.6" height="10.8" rx="2.9" ry="3.4" fill="none" stroke="#e8e8e8" stroke-width="1.25"/>
<rect x="798" y="623.4" width="154.60000000000002" height="21.600000000000023" rx="10.800000000000011" ry="10.800000000000011" fill="#000"/>
<circle cx="810" cy="633.8" r="10" fill="#e01010"/>
<path d="M806.40 630.60 L810.60 627.00 V640.60" fill="none" stroke="#000" stroke-width="2.6" stroke-linejoin="miter"/>
<path d="M823 642 H834 L840 626 H845.5" fill="none" stroke="#e8e8e8" stroke-width="1.7"/>
<text style="white-space:pre" x="922.86 935.90 948.95 961.99 975.03 988.08" y="641.3" fill="#e8e8e8" font-size="18" font-weight="normal" stroke="#000" stroke-width="0.2"  transform="scale(0.92 1)"> .  mV</text>
<rect x="850.00" y="629.90" width="5.6" height="10.8" rx="2.9" ry="3.4" fill="none" stroke="#e8e8e8" stroke-width="1.25"/>
<rect x="874.00" y="629.90" width="5.6" height="10.8" rx="2.9" ry="3.4" fill="none" stroke="#e8e8e8" stroke-width="1.25"/>
<rect x="886.00" y="629.90" width="5.6" height="10.8" rx="2.9" ry="3.4" fill="none" stroke="#e8e8e8" stroke-width="1.25"/>
<rect x="387" y="649" width="108.0" height="67.0" rx="3" ry="3" fill="#033a80"/>
<rect x="387" y="649" width="105.5" height="64.5" rx="3" ry="3" fill="#58aef0"/>
<rect x="388.6" y="650.6" width="103.89999999999998" height="62.89999999999998" rx="2" ry="2" fill="#0080e0"/>
<text style="white-space:pre" x="414.60 426.60 438.60 450.60" y="674" fill="#061c50" font-size="18" font-weight="normal" stroke="#061c50" stroke-width="0.5" >Type</text>
<rect x="409" y="685.6" width="60" height="23.399999999999977" fill="#e4e4e4"/>
<text style="white-space:pre" x="410.60 422.60 434.60 446.60 458.60" y="702.8" fill="#000" font-size="18" font-weight="normal" stroke="#000" stroke-width="0.45" >Image</text>
<rect x="717" y="649.5" width="107.5" height="66.79999999999995" rx="3" ry="3" fill="#033a80"/>
<rect x="717" y="649.5" width="105" height="64.29999999999995" rx="3" ry="3" fill="#58aef0"/>
<rect x="718.6" y="651.1" width="103.39999999999998" height="62.69999999999993" rx="2" ry="2" fill="#0080e0"/>
<text style="white-space:pre" x="744.60 756.60 768.60 780.60" y="688.8" fill="#061c50" font-size="18" font-weight="normal" stroke="#061c50" stroke-width="0.5" >Save</text>
</g>
</svg>
</body></html>
